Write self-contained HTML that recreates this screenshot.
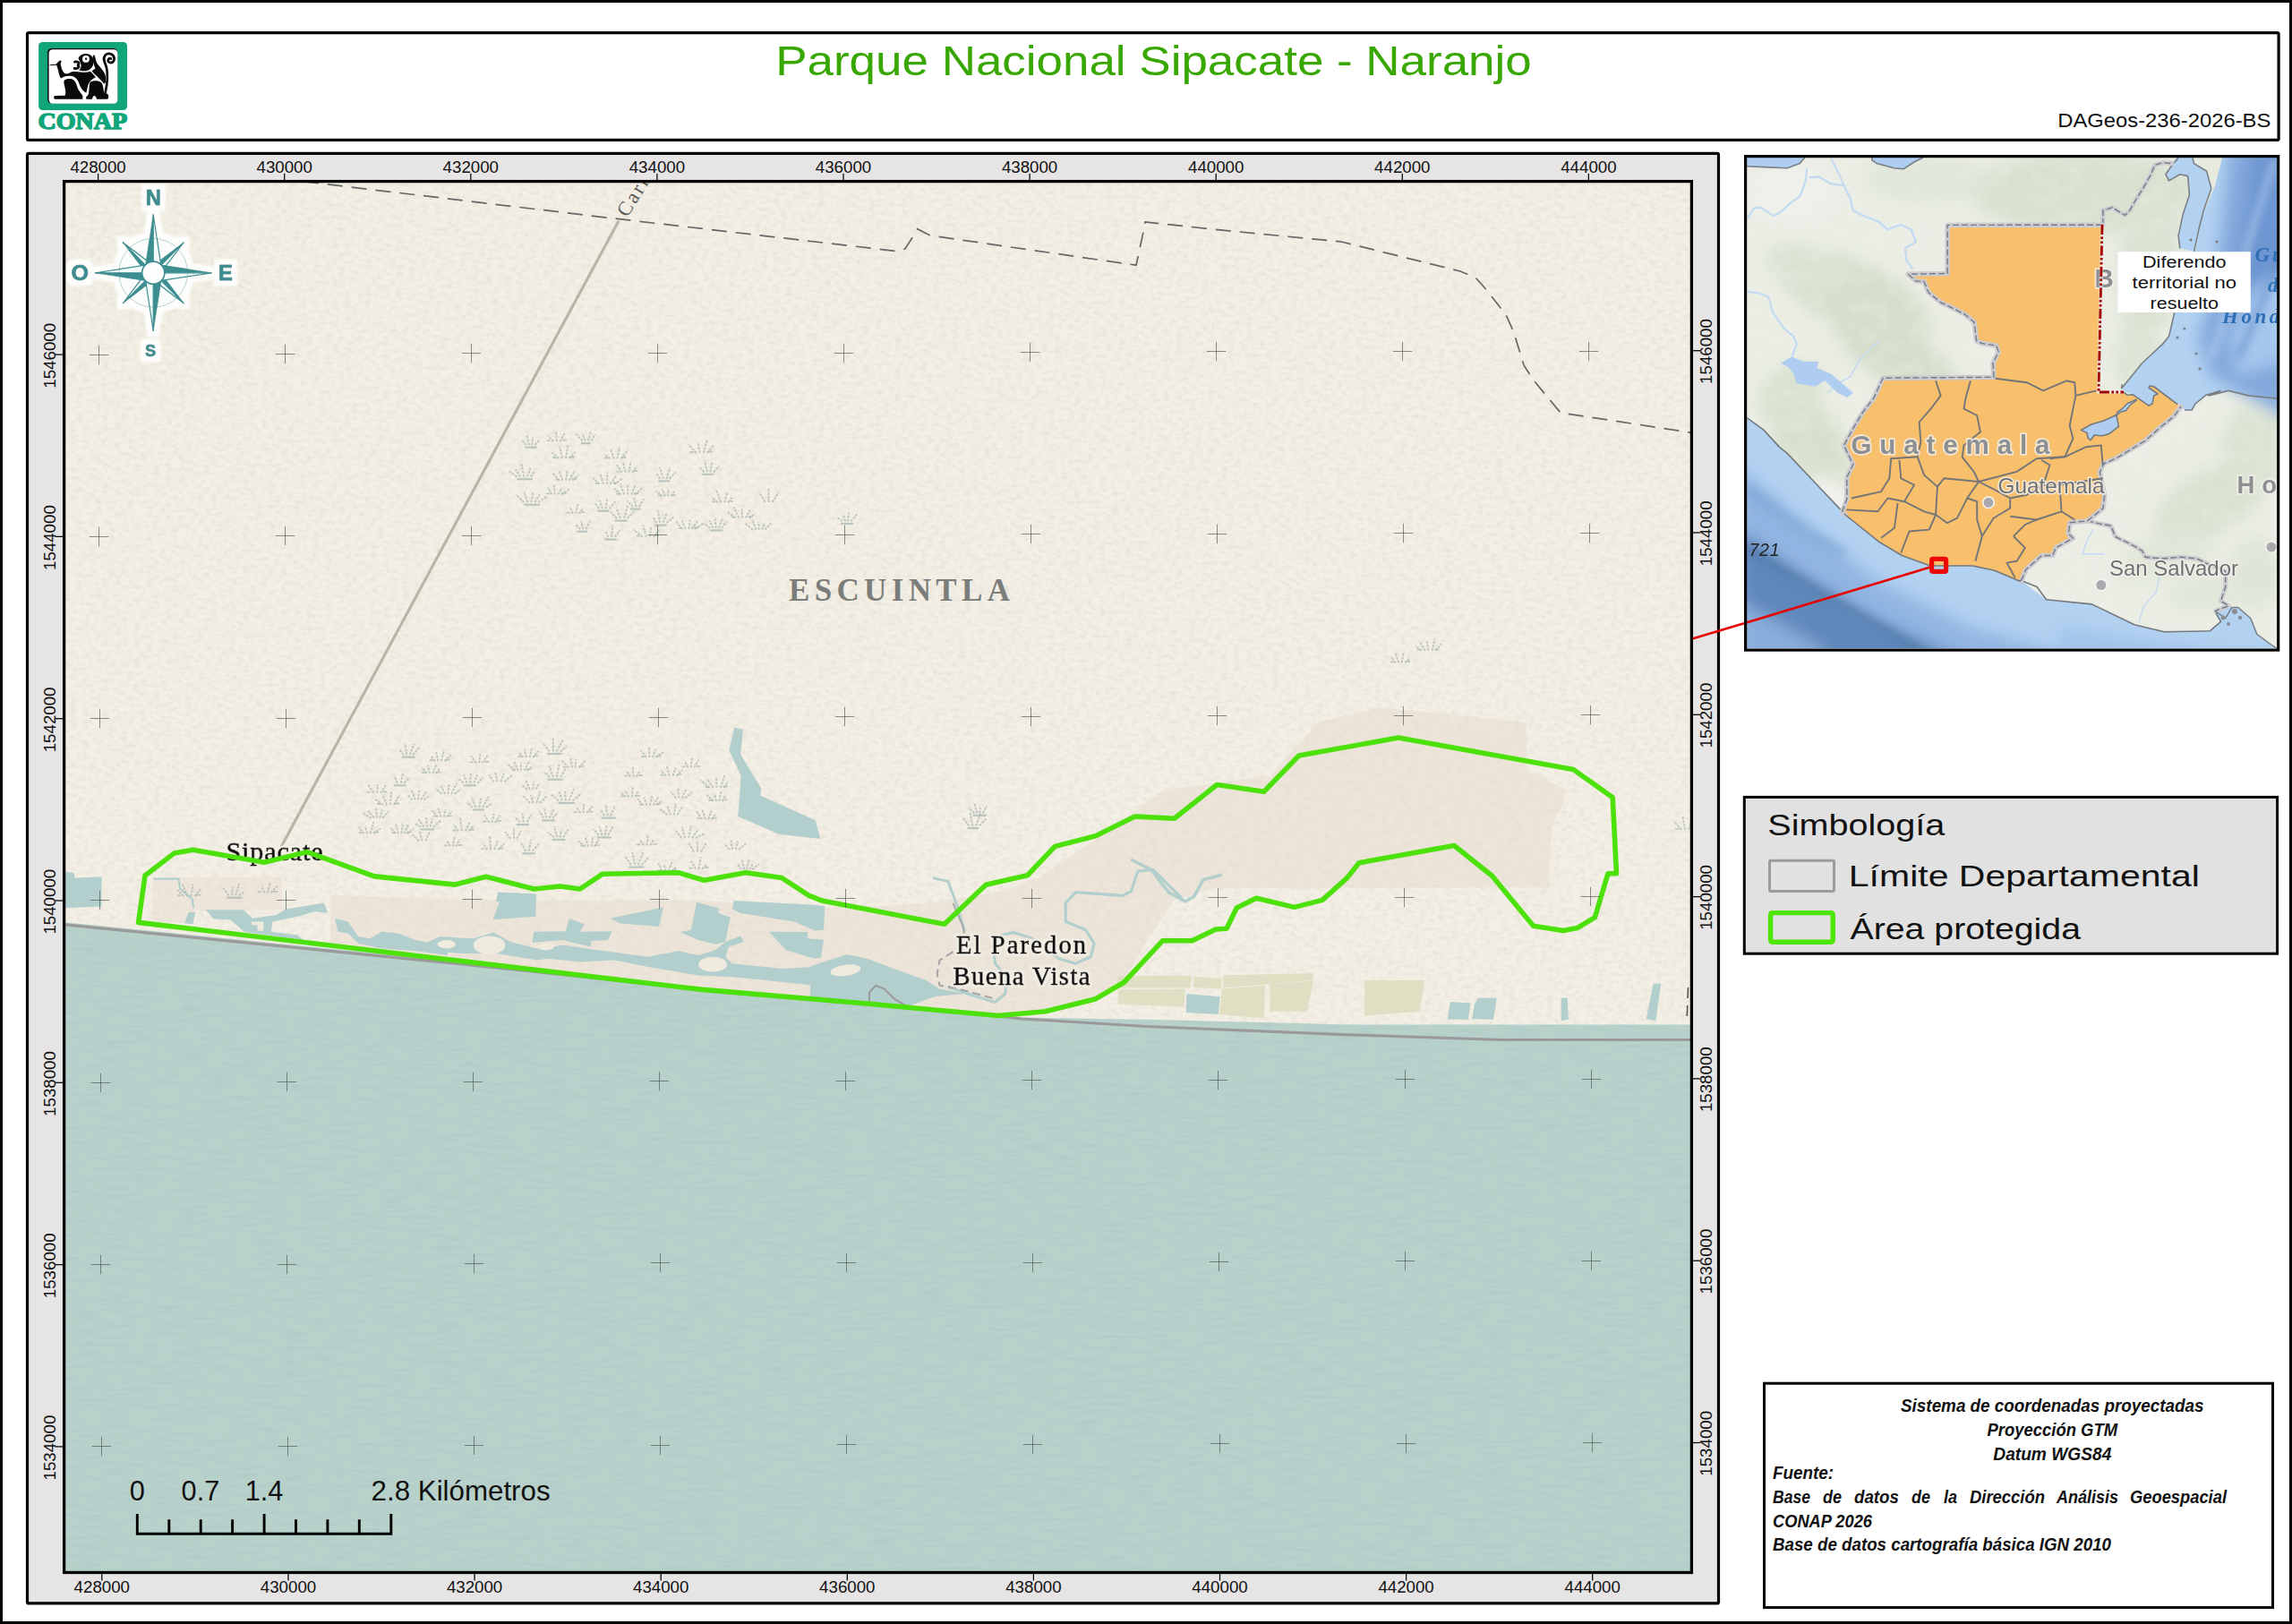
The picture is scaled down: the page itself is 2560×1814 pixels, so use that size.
<!DOCTYPE html>
<html lang="es"><head><meta charset="utf-8"><title>Parque Nacional Sipacate - Naranjo</title>
<style>
html,body{margin:0;padding:0;background:#fff;}
body{width:2560px;height:1814px;overflow:hidden;font-family:"Liberation Sans",sans-serif;}
svg{display:block;position:absolute;left:0;top:0;}
text{white-space:pre;}
</style></head><body>
<svg width="2560" height="1814" viewBox="0 0 2560 1814">
<defs>
<filter id="paper" x="0" y="0" width="100%" height="100%" filterUnits="objectBoundingBox">
  <feTurbulence type="fractalNoise" baseFrequency="0.14 0.22" numOctaves="2" seed="3" result="n"/>
  <feColorMatrix in="n" type="matrix" values="0 0 0 0 0.50  0 0 0 0 0.46  0 0 0 0 0.36  1.1 0 0 0 -0.46" result="c"/>
  <feComposite in="c" in2="SourceGraphic" operator="over"/>
</filter>
<filter id="waves" x="0" y="0" width="100%" height="100%">
  <feTurbulence type="fractalNoise" baseFrequency="0.035 0.24" numOctaves="2" seed="8" result="n"/>
  <feColorMatrix in="n" type="matrix" values="0 0 0 0 0.40  0 0 0 0 0.55  0 0 0 0 0.55  1.1 0 0 0 -0.48" result="c"/>
  <feComposite in="c" in2="SourceGraphic" operator="in"/>
</filter>
<filter id="halo" x="-20%" y="-20%" width="140%" height="140%">
  <feMorphology in="SourceAlpha" operator="dilate" radius="5.5" result="d"/>
  <feGaussianBlur in="d" stdDeviation="1.1" result="b"/>
  <feFlood flood-color="#fdfdfb"/><feComposite in2="b" operator="in" result="h"/>
  <feMerge><feMergeNode in="h"/><feMergeNode in="SourceGraphic"/></feMerge>
</filter>
<filter id="halo2" x="-10%" y="-30%" width="120%" height="160%"><feMorphology in="SourceAlpha" operator="dilate" radius="1.6" result="d"/><feGaussianBlur in="d" stdDeviation="1.2" result="b"/><feFlood flood-color="#f4f1e8" flood-opacity="0.9"/><feComposite in2="b" operator="in" result="h"/><feMerge><feMergeNode in="h"/><feMergeNode in="SourceGraphic"/></feMerge></filter>
<filter id="relief" x="0" y="0" width="100%" height="100%">
  <feTurbulence type="fractalNoise" baseFrequency="0.045 0.06" numOctaves="3" seed="5" result="n"/>
  <feColorMatrix in="n" type="matrix" values="0 0 0 0 0.80  0 0 0 0 0.86  0 0 0 0 0.76  1.6 0 0 0 -0.62"/>
</filter>
<filter id="blur2"><feGaussianBlur stdDeviation="2"/></filter>
<filter id="blur5"><feGaussianBlur stdDeviation="5"/></filter>
<filter id="blur9"><feGaussianBlur stdDeviation="9"/></filter>
<clipPath id="mapclip"><rect x="73" y="204" width="1815" height="1551"/></clipPath>
<clipPath id="insclip"><rect x="1951" y="176" width="592" height="548"/></clipPath>
</defs>
<rect x="1.5" y="1.5" width="2557" height="1811" fill="#fff" stroke="#000" stroke-width="3"/>
<rect x="30.5" y="36.6" width="2514.6" height="119.8" rx="1.5" fill="#fff" stroke="#000" stroke-width="3.2"/>
<text x="1288.5" y="83.8" font-family="Liberation Sans, sans-serif" font-size="46.5" fill="#38a800" text-anchor="middle" textLength="844.5" lengthAdjust="spacingAndGlyphs">Parque Nacional Sipacate - Naranjo</text>
<text x="2536.3" y="141.8" font-family="Liberation Sans, sans-serif" font-size="22.2" fill="#111" text-anchor="end" textLength="238" lengthAdjust="spacingAndGlyphs">DAGeos-236-2026-BS</text>
<rect x="30.5" y="171.4" width="1889" height="1619.5" rx="1.5" fill="#e6e4e5" stroke="#000" stroke-width="3.2"/>
<rect x="43.1" y="46.9" width="98.9" height="76.1" rx="4.2" fill="#10a67a"/>
<rect x="53.1" y="54.0" width="78.2" height="61.6" rx="4.6" fill="#0a0a0a"/>
<rect x="54.6" y="55.3" width="76.8" height="60.4" rx="4.2" fill="#fff"/>
<g transform="translate(36,40) scale(0.06774)" fill="#0a0a0a">
<path d="M650 595 C700 585 760 600 830 600 C900 600 940 590 962 585 L1048 682 C1000 700 950 740 925 800 C905 850 905 905 890 940 C850 925 810 880 785 820 C770 770 750 720 700 682 C660 655 590 655 540 668 L470 702 C450 660 435 610 425 560 C418 525 410 500 398 482 L290 490 L290 476 L392 468 C420 440 445 415 462 404 L484 424 C470 440 466 458 468 474 C478 520 492 570 520 606 C540 630 570 632 600 620 Z"/>
<path d="M528 735 C560 705 640 700 685 730 C720 760 735 820 752 870 C775 920 815 955 832 990 L832 1046 L372 1046 C350 1040 350 1000 372 990 L540 986 C560 950 548 900 538 850 C528 800 515 765 528 735 Z"/>
<path d="M958 765 C1000 735 1090 735 1140 770 C1170 800 1172 880 1186 940 C1215 950 1250 950 1256 980 C1262 1015 1250 1046 1235 1046 L1062 1046 C1058 1020 1052 1000 1022 986 C1000 996 992 1020 990 1046 L892 1046 C880 1020 890 995 916 986 C935 950 935 900 940 850 C942 810 945 785 958 765 Z"/>
<path d="M1005 318 C1025 310 1035 330 1045 380 C1050 410 1058 440 1080 470 C1110 505 1160 560 1190 612 C1212 655 1220 715 1208 760 C1200 785 1190 792 1182 790 C1160 760 1120 720 1080 680 C1045 645 1005 610 985 582 C1000 560 1020 548 1040 546 C1030 520 1020 490 1012 455 C1002 420 995 340 1005 318 Z"/>
<path d="M760 370 C790 300 880 280 950 310 C1010 340 1025 420 1000 490 C975 555 900 590 830 578 C800 575 775 570 770 565 C800 545 815 500 800 460 C790 425 770 400 760 370 Z"/>
<circle cx="885" cy="382" r="58" fill="#fff"/><circle cx="887" cy="380" r="17"/>
<path d="M700 430 C775 415 790 470 740 485 C790 495 775 550 695 538" fill="none" stroke="#0a0a0a" stroke-width="40" stroke-linecap="round"/>
<path d="M1205 940 C1235 800 1255 660 1225 525 C1205 445 1150 385 1205 318 C1260 268 1345 300 1352 372 C1356 432 1302 462 1262 432 C1235 402 1262 360 1298 376" fill="none" stroke="#0a0a0a" stroke-width="40" stroke-linecap="round"/>
</g>
<text x="42.6" y="144.4" font-family="Liberation Serif, serif" font-weight="bold" font-size="25.5" fill="#10a67a" stroke="#10a67a" stroke-width="1.5" stroke-linejoin="round" textLength="99.5" lengthAdjust="spacingAndGlyphs">CONAP</text>
<g clip-path="url(#mapclip)">
<rect x="70" y="201" width="1821" height="1557" fill="#f3efe5"/>
<rect x="70" y="201" width="1821" height="1557" fill="#f3efe5" filter="url(#paper)" opacity="0.42"/>
<polygon points="369.0,1000.0 540.0,1005.0 660.0,1005.4 779.0,1005.4 915.0,1014.0 1000.0,1011.0 1042.5,1008.2 1119.0,995.5 1158.6,981.3 1226.6,936.0 1300.3,882.2 1419.3,866.6 1472.6,807.0 1540.6,790.0 1705.0,807.0 1705.0,861.0 1747.4,880.8 1747.4,895.0 1733.0,923.0 1730.4,991.3 1354.0,992.6 1311.6,1005.4 1283.3,1046.5 1255.0,1097.5 1224.0,1115.0 1167.0,1130.0 1115.0,1134.0 970.0,1121.0 784.0,1105.0 500.0,1072.0 369.0,1056.0" fill="#e8dccf" opacity="0.55"/>
<polygon points="170.5,979.9 315.0,979.9 315.0,1016.8 218.6,1016.8 207.3,1030.9 170.5,1028.1" fill="#e8dccf" opacity="0.45"/>
<polygon points="69.0,1029.8 72.8,1030.2 500.0,1072.8 660.0,1089.4 784.6,1104.0 970.7,1120.0 1115.0,1133.0 1141.6,1136.5 1280.0,1138.8 1506.6,1144.5 1892.0,1144.5 1892.0,1760.0 69.0,1760.0" fill="#b8d1cb"/>
<polygon points="69.0,1029.8 72.8,1030.2 500.0,1072.8 660.0,1089.4 784.6,1104.0 970.7,1120.0 1115.0,1133.0 1141.6,1136.5 1280.0,1138.8 1506.6,1144.5 1892.0,1144.5 1892.0,1760.0 69.0,1760.0" fill="#b8d1cb" filter="url(#waves)" opacity="0.95"/>
<polyline points="69.0,1032.4 72.8,1032.8 500.0,1075.4 660.0,1091.8 784.6,1106.0 970.7,1122.0 1115.0,1135.0 1141.6,1138.0 1280.0,1146.5 1506.6,1155.8 1676.6,1161.5 1892.0,1161.5" fill="none" stroke="#9b9a9b" stroke-width="3.2"/>
<polygon points="820.1,812.8 830.0,815.1 827.1,842.5 850.4,880.8 849.2,888.4 910.7,916.2 916.4,936.9 869.6,931.8 824.3,912.0 827.7,866.6 814.4,838.3" fill="#b3cfcd" />
<polygon points="70.0,973.2 83.1,975.0 83.1,980.7 113.5,979.2 113.5,1012.6 70.0,1014.4" fill="#b3cfcd" />
<polygon points="210.7,1019.1 218.2,1019.1 215.4,1032.3 206.0,1031.3" fill="#b3cfcd" />
<polygon points="229.5,1016.3 271.7,1016.3 282.0,1025.7 308.3,1021.9 319.5,1015.4 361.7,1008.4 366.4,1019.7 351.4,1018.2 332.7,1023.8 304.5,1029.4 302.6,1040.7 332.7,1044.4 338.3,1050.1 285.8,1042.6 272.6,1040.7 257.6,1027.6 238.9,1026.6" fill="#b3cfcd" />
<polygon points="281.1,1029.4 294.2,1029.4 294.2,1039.8 287.6,1039.8 287.6,1033.2 281.1,1033.2" fill="#efeade"/>
<polyline points="171.3,981.6 199.5,981.6 201.3,992.9 214.5,1004.1 216.3,1014.4" fill="none" stroke="#b3cfcd" stroke-width="2.2"/>
<polygon points="373.9,1025.7 388.9,1029.4 400.2,1046.3 413.3,1048.2 426.5,1040.7 445.2,1042.6 464.0,1050.1 482.8,1053.8 500.0,1046.3 500.0,1067.0 464.0,1062.3 426.5,1059.5 400.2,1053.8 388.9,1042.6 377.7,1040.7" fill="#b3cfcd" />
<polygon points="556.0,996.6 599.1,998.5 598.2,1023.8 550.4,1027.2 557.9,1007.8 554.1,1006.9" fill="#b3cfcd" />
<polygon points="635.7,1025.7 652.6,1032.2 647.9,1040.7 683.6,1040.3 678.9,1050.1 660.1,1051.0 660.1,1057.6 643.2,1053.8 628.2,1050.1 594.4,1052.9 596.3,1040.7 632.0,1040.3" fill="#b3cfcd" />
<polygon points="681.7,1025.7 740.8,1013.5 736.1,1035.0 692.0,1031.3" fill="#b3cfcd" />
<polygon points="778.3,1007.8 802.7,1014.4 802.7,1020.0 815.8,1024.7 810.2,1051.9 798.9,1054.7 780.2,1050.1 759.5,1041.1 771.7,1038.8" fill="#b3cfcd" />
<polygon points="819.6,1006.0 910.0,1010.7 921.3,1012.2 920.0,1038.4 910.0,1039.5 887.1,1029.4 827.1,1020.0 817.7,1015.3" fill="#b3cfcd" />
<polygon points="859.0,1040.7 902.1,1041.1 902.1,1048.2 920.0,1049.7 916.8,1069.8 910.0,1070.7 877.7,1061.3" fill="#b3cfcd" />
<polygon points="478.1,1051.9 491.3,1046.3 528.8,1048.2 551.3,1041.6 570.1,1051.9 600.1,1059.4 630.1,1055.7 667.6,1061.3 723.9,1068.8 757.7,1062.3 780.2,1066.9 798.9,1061.3 810.2,1051.9 827.1,1045.4 830.8,1051.9 814.0,1057.6 810.2,1068.8 817.7,1076.3 874.0,1082.0 910.0,1080.1 910.0,1100.7 855.2,1095.1 817.7,1091.3 780.2,1089.5 723.9,1080.1 686.4,1072.6 648.9,1074.4 611.3,1070.7 600.1,1072.6 555.0,1065.1 517.5,1065.1 478.1,1062.3" fill="#b3cfcd" />
<ellipse cx="498.8" cy="1054.7" rx="10.3" ry="4.7" fill="#efeade" transform="rotate(0 498.8 1054.7)"/>
<ellipse cx="546.6" cy="1055.7" rx="17.8" ry="10.3" fill="#efeade" transform="rotate(0 546.6 1055.7)"/>
<ellipse cx="609.5" cy="1057.6" rx="9.4" ry="3.8" fill="#efeade" transform="rotate(0 609.5 1057.6)"/>
<ellipse cx="796.1" cy="1077.3" rx="15.9" ry="8.4" fill="#efeade" transform="rotate(0 796.1 1077.3)"/>
<polygon points="905.0,1079.5 914.4,1076.3 946.3,1066.0 968.8,1070.7 1002.6,1083.8 1034.5,1095.0 1049.5,1104.5 1077.6,1110.0 1045.0,1113.0 1028.0,1119.0 1012.0,1125.0 970.0,1121.5 905.0,1114.0" fill="#b3cfcd"/>
<ellipse cx="944.4" cy="1083.8" rx="17" ry="6.2" fill="#efeade" transform="rotate(-8 944.4 1083.8)"/>
<polyline points="1320.0,1003.2 1287.7,971.3 1270.9,973.1 1263.4,995.6 1254.0,1000.3 1201.4,996.6 1190.2,1008.8 1190.2,1029.4 1212.7,1038.8 1222.1,1053.8 1218.3,1068.8 1201.4,1076.3 1182.7,1070.7 1152.7,1048.2 1132.0,1041.6 1118.9,1044.4 1109.5,1055.7 1111.4,1076.3 1124.5,1091.3 1122.6,1110.1 1111.4,1119.5 1087.0,1112.0 1058.9,1102.6" fill="none" stroke="#b3cfcd" stroke-width="3.2" stroke-linejoin="round"/>
<polyline points="1042.0,980.6 1058.9,984.4 1070.1,1014.4 1077.6,1040.7" fill="none" stroke="#b3cfcd" stroke-width="3" stroke-linejoin="round"/>
<polyline points="1263.0,960.1 1285.7,971.4 1305.5,996.9 1323.9,1006.9 1333.8,1001.2 1343.7,982.8 1365.0,977.1" fill="none" stroke="#b3cfcd" stroke-width="3.5" stroke-linejoin="round"/>
<polyline points="1064.5,1063.2 1049.5,1072.6 1046.7,1087.6 1049.5,1100.7 1066.4,1103.5 1111.4,1115.7" fill="none" stroke="#a3a3a3" stroke-width="2" stroke-dasharray="9 5"/>
<path d="M970.7 1123.2 L971.1 1108.2 L978.2 1100.7 L987.6 1104.5 L998.8 1115.7 L1010.1 1122.3" fill="none" stroke="#9a9a9a" stroke-width="2"/>
<polyline points="1064.5,1008.8 1070.1,1021.9 1075.7,1035.0 1076.7,1042.6" fill="none" stroke="#a8a8a8" stroke-width="2"/>
<polygon points="1248.8,1090.1 1331.0,1090.1 1329.6,1103.4 1248.8,1103.4" fill="#dfdfc3" />
<polygon points="1248.8,1105.4 1323.9,1104.8 1322.5,1124.6 1248.8,1121.8" fill="#dfdfc3" />
<polygon points="1333.8,1090.7 1365.0,1093.5 1363.6,1104.8 1332.4,1102.5" fill="#dfdfc3" />
<polygon points="1366.4,1089.2 1467.0,1087.3 1466.4,1094.9 1366.4,1103.4" fill="#dfdfc3" />
<polygon points="1365.0,1104.8 1413.1,1100.6 1411.7,1137.4 1362.2,1133.1" fill="#dfdfc3" />
<polygon points="1418.8,1099.2 1467.0,1095.8 1459.9,1129.7 1418.2,1129.7" fill="#dfdfc3" />
<polygon points="1524.2,1094.9 1591.0,1094.9 1585.9,1129.7 1524.2,1134.6" fill="#dfdfc3" />
<polygon points="1325.3,1109.9 1362.7,1113.3 1360.7,1133.1 1324.8,1130.9" fill="#b3cfcd" />
<polygon points="1619.9,1119.0 1642.6,1120.4 1639.8,1138.8 1616.5,1138.8" fill="#b3cfcd" />
<polygon points="1651.1,1114.7 1671.8,1114.7 1668.1,1138.8 1644.0,1138.2 1646.9,1121.8" fill="#b3cfcd" />
<polygon points="1743.7,1114.7 1750.8,1114.7 1751.7,1138.8 1743.7,1140.2" fill="#b3cfcd" />
<polygon points="1846.6,1099.2 1855.1,1098.6 1849.4,1140.2 1838.6,1138.2" fill="#b3cfcd" />
<line x1="1885.5" y1="1103" x2="1884" y2="1143" stroke="#555" stroke-width="1.6" stroke-dasharray="12 8"/>
<path d="M693.2 552.5L686.6 545.7M697.2 552.5L692.7 540.5M701.2 552.5L701.3 541.4M705.2 552.5L709.3 542.4M709.2 552.5L718.8 543.7" stroke="#aebab6" stroke-width="1.9" fill="none" stroke-dasharray="2.8 1.2" opacity="0.78"/>
<path d="M708.3 551.0h5M688.2 551.5h4" stroke="#aebab6" stroke-width="1.8" opacity="0.75"/>
<path d="M737.4 534.8L733.0 528.4M740.9 534.8L736.8 522.1M744.4 534.8L748.4 522.6M748.0 534.8L754.7 527.3" stroke="#aebab6" stroke-width="1.9" fill="none" stroke-dasharray="2.8 1.2" opacity="0.78"/>
<path d="M735.4 537.4h12.8" stroke="#aebab6" stroke-width="2.2" opacity="0.8"/>
<path d="M650.6 492.5L643.5 484.9M653.7 492.5L650.4 484.1M656.9 492.5L659.7 482.6M660.0 492.5L664.9 485.1" stroke="#aebab6" stroke-width="1.9" fill="none" stroke-dasharray="2.8 1.2" opacity="0.78"/>
<path d="M648.8 495.1h10.8" stroke="#aebab6" stroke-width="2.2" opacity="0.8"/>
<path d="M577.6 532.6L568.0 525.8M581.4 532.6L575.6 524.5M585.2 532.6L582.4 518.0M589.0 532.6L592.3 523.0M592.7 532.6L597.7 525.7" stroke="#aebab6" stroke-width="1.9" fill="none" stroke-dasharray="2.8 1.2" opacity="0.78"/>
<path d="M577.4 535.2h17.6" stroke="#aebab6" stroke-width="2.2" opacity="0.8"/>
<path d="M616.3 552.4L611.8 544.2M619.8 552.4L618.7 541.6M623.3 552.4L627.8 544.8M626.8 552.4L636.6 546.0" stroke="#aebab6" stroke-width="1.9" fill="none" stroke-dasharray="2.8 1.2" opacity="0.78"/>
<path d="M627.7 550.9h5M610.2 551.4h4" stroke="#aebab6" stroke-width="1.8" opacity="0.75"/>
<path d="M739.9 554.3L732.5 548.3M743.0 554.3L739.6 545.9M746.1 554.3L746.5 546.1M749.2 554.3L753.8 548.3" stroke="#aebab6" stroke-width="1.9" fill="none" stroke-dasharray="2.8 1.2" opacity="0.78"/>
<path d="M750.1 552.8h5M734.5 553.3h4" stroke="#aebab6" stroke-width="1.8" opacity="0.75"/>
<path d="M669.7 540.9L662.1 533.7M673.8 540.9L670.6 529.4M677.8 540.9L678.5 527.2M681.8 540.9L688.0 531.8M685.9 540.9L695.4 534.7" stroke="#aebab6" stroke-width="1.9" fill="none" stroke-dasharray="2.8 1.2" opacity="0.78"/>
<path d="M684.9 539.4h5M664.7 539.9h4" stroke="#aebab6" stroke-width="1.8" opacity="0.75"/>
<path d="M588.0 497.1L582.6 491.6M591.2 497.1L588.5 486.8M594.3 497.1L595.2 488.4M597.5 497.1L602.0 491.7" stroke="#aebab6" stroke-width="1.9" fill="none" stroke-dasharray="2.8 1.2" opacity="0.78"/>
<path d="M586.2 499.7h13.4" stroke="#aebab6" stroke-width="2.2" opacity="0.8"/>
<path d="M648.0 591.1L642.4 585.4M651.3 591.1L648.8 581.9M654.5 591.1L659.5 581.3" stroke="#aebab6" stroke-width="1.9" fill="none" stroke-dasharray="2.8 1.2" opacity="0.78"/>
<path d="M644.5 593.7h11.4" stroke="#aebab6" stroke-width="2.2" opacity="0.8"/>
<path d="M694.9 527.7L689.1 519.2M698.7 527.7L695.9 516.8M702.5 527.7L704.6 515.0M706.3 527.7L711.5 521.1" stroke="#aebab6" stroke-width="1.9" fill="none" stroke-dasharray="2.8 1.2" opacity="0.78"/>
<path d="M707.3 526.2h5M688.3 526.7h4" stroke="#aebab6" stroke-width="1.8" opacity="0.75"/>
<path d="M777.7 506.0L768.9 496.3M781.8 506.0L779.2 493.7M785.8 506.0L789.8 491.3M789.8 506.0L797.4 497.0" stroke="#aebab6" stroke-width="1.9" fill="none" stroke-dasharray="2.8 1.2" opacity="0.78"/>
<path d="M790.9 504.5h5M770.7 505.0h4" stroke="#aebab6" stroke-width="1.8" opacity="0.75"/>
<path d="M585.1 561.1L576.3 552.3M589.2 561.1L585.2 548.9M593.3 561.1L595.0 550.5M597.3 561.1L602.8 552.3M601.4 561.1L610.4 554.5" stroke="#aebab6" stroke-width="1.9" fill="none" stroke-dasharray="2.8 1.2" opacity="0.78"/>
<path d="M584.9 563.7h18.2" stroke="#aebab6" stroke-width="2.2" opacity="0.8"/>
<path d="M689.0 579.0L682.1 571.7M693.0 579.0L688.3 567.0M697.0 579.0L701.2 564.7M700.9 579.0L709.9 569.3" stroke="#aebab6" stroke-width="1.9" fill="none" stroke-dasharray="2.8 1.2" opacity="0.78"/>
<path d="M686.7 581.6h14.1" stroke="#aebab6" stroke-width="2.2" opacity="0.8"/>
<path d="M624.7 536.7L616.9 527.9M628.4 536.7L624.8 526.3M632.1 536.7L633.6 526.1M635.8 536.7L642.0 525.4M639.5 536.7L646.6 530.4" stroke="#aebab6" stroke-width="1.9" fill="none" stroke-dasharray="2.8 1.2" opacity="0.78"/>
<path d="M638.6 535.2h5M620.1 535.7h4" stroke="#aebab6" stroke-width="1.8" opacity="0.75"/>
<path d="M681.7 512.5L675.1 507.4M685.6 512.5L681.9 500.9M689.4 512.5L691.9 499.4M693.3 512.5L701.7 502.9" stroke="#aebab6" stroke-width="1.9" fill="none" stroke-dasharray="2.8 1.2" opacity="0.78"/>
<path d="M694.3 511.0h5M675.1 511.5h4" stroke="#aebab6" stroke-width="1.8" opacity="0.75"/>
<path d="M618.3 493.2L611.9 486.7M621.8 493.2L621.1 481.6M625.4 493.2L630.8 483.8" stroke="#aebab6" stroke-width="1.9" fill="none" stroke-dasharray="2.8 1.2" opacity="0.78"/>
<path d="M628.1 491.7h5M610.4 492.2h4" stroke="#aebab6" stroke-width="1.8" opacity="0.75"/>
<path d="M793.4 589.9L785.8 584.8M796.5 589.9L792.3 581.2M799.7 589.9L798.3 578.0M802.8 589.9L807.1 578.4M806.0 589.9L811.9 582.8" stroke="#aebab6" stroke-width="1.9" fill="none" stroke-dasharray="2.8 1.2" opacity="0.78"/>
<path d="M793.2 592.5h14.2" stroke="#aebab6" stroke-width="2.2" opacity="0.8"/>
<path d="M801.6 561.3L795.3 555.7M805.4 561.3L799.9 547.4M809.2 561.3L812.0 550.7M813.0 561.3L818.2 555.1" stroke="#aebab6" stroke-width="1.9" fill="none" stroke-dasharray="2.8 1.2" opacity="0.78"/>
<path d="M814.0 559.8h5M795.1 560.3h4" stroke="#aebab6" stroke-width="1.8" opacity="0.75"/>
<path d="M762.0 590.9L754.6 581.8M765.6 590.9L762.0 581.6M769.1 590.9L770.8 580.7M772.6 590.9L779.8 581.1M776.2 590.9L785.7 584.8" stroke="#aebab6" stroke-width="1.9" fill="none" stroke-dasharray="2.8 1.2" opacity="0.78"/>
<path d="M775.4 589.4h5M757.7 589.9h4" stroke="#aebab6" stroke-width="1.8" opacity="0.75"/>
<path d="M840.8 591.7L832.5 584.8M844.2 591.7L840.2 579.5M847.5 591.7L847.5 582.9M850.8 591.7L854.1 583.9M854.2 591.7L861.2 584.6" stroke="#aebab6" stroke-width="1.9" fill="none" stroke-dasharray="2.8 1.2" opacity="0.78"/>
<path d="M733.3 584.0L729.0 577.3M737.0 584.0L735.1 570.4M740.7 584.0L744.8 572.6M744.4 584.0L752.4 577.5" stroke="#aebab6" stroke-width="1.9" fill="none" stroke-dasharray="2.8 1.2" opacity="0.78"/>
<path d="M731.2 586.6h13.4" stroke="#aebab6" stroke-width="2.2" opacity="0.8"/>
<path d="M669.2 568.1L663.7 561.3M672.9 568.1L669.6 558.9M676.6 568.1L678.3 555.9M680.3 568.1L687.4 560.3" stroke="#aebab6" stroke-width="1.9" fill="none" stroke-dasharray="2.8 1.2" opacity="0.78"/>
<path d="M667.2 570.7h13.2" stroke="#aebab6" stroke-width="2.2" opacity="0.8"/>
<path d="M786.5 527.3L781.4 521.7M790.0 527.3L787.1 514.4M793.5 527.3L795.1 516.2M797.1 527.3L803.5 520.6" stroke="#aebab6" stroke-width="1.9" fill="none" stroke-dasharray="2.8 1.2" opacity="0.78"/>
<path d="M784.5 529.9h12.5" stroke="#aebab6" stroke-width="2.2" opacity="0.8"/>
<path d="M821.5 578.6L813.1 571.8M825.2 578.6L819.5 566.2M829.0 578.6L828.7 568.5M832.8 578.6L837.8 569.5M836.6 578.6L843.7 573.7" stroke="#aebab6" stroke-width="1.9" fill="none" stroke-dasharray="2.8 1.2" opacity="0.78"/>
<path d="M835.7 577.1h5M816.8 577.6h4" stroke="#aebab6" stroke-width="1.8" opacity="0.75"/>
<path d="M624.2 512.0L616.6 505.5M628.0 512.0L625.1 499.0M631.9 512.0L634.4 497.1M635.8 512.0L642.6 504.8" stroke="#aebab6" stroke-width="1.9" fill="none" stroke-dasharray="2.8 1.2" opacity="0.78"/>
<path d="M636.8 510.5h5M617.4 511.0h4" stroke="#aebab6" stroke-width="1.8" opacity="0.75"/>
<path d="M679.3 600.0L676.1 592.6M683.0 600.0L684.6 586.8M686.7 600.0L692.5 592.2" stroke="#aebab6" stroke-width="1.9" fill="none" stroke-dasharray="2.8 1.2" opacity="0.78"/>
<path d="M675.3 602.6h13.3" stroke="#aebab6" stroke-width="2.2" opacity="0.8"/>
<path d="M854.7 560.9L847.9 549.9M858.6 560.9L858.4 545.8M862.5 560.9L869.8 550.2" stroke="#aebab6" stroke-width="1.9" fill="none" stroke-dasharray="2.8 1.2" opacity="0.78"/>
<path d="M639.7 573.6L636.4 565.9M642.8 573.6L645.8 562.5M645.9 573.6L650.9 568.6" stroke="#aebab6" stroke-width="1.9" fill="none" stroke-dasharray="2.8 1.2" opacity="0.78"/>
<path d="M648.2 572.1h5M632.7 572.6h4" stroke="#aebab6" stroke-width="1.8" opacity="0.75"/>
<path d="M717.9 599.7L707.5 591.8M721.9 599.7L718.3 586.4M725.9 599.7L727.3 588.1M730.0 599.7L737.2 590.9" stroke="#aebab6" stroke-width="1.9" fill="none" stroke-dasharray="2.8 1.2" opacity="0.78"/>
<path d="M731.0 598.2h5M710.9 598.7h4" stroke="#aebab6" stroke-width="1.8" opacity="0.75"/>
<path d="M707.2 566.0L699.9 559.3M710.6 566.0L708.2 556.4M714.0 566.0L719.0 557.3" stroke="#aebab6" stroke-width="1.9" fill="none" stroke-dasharray="2.8 1.2" opacity="0.78"/>
<path d="M703.7 568.6h11.7" stroke="#aebab6" stroke-width="2.2" opacity="0.8"/>
<path d="M570.4 936.7L564.2 929.1M573.9 936.7L574.3 924.7M577.3 936.7L581.9 928.3" stroke="#aebab6" stroke-width="1.9" fill="none" stroke-dasharray="2.8 1.2" opacity="0.78"/>
<path d="M613.8 868.1L607.6 862.0M617.9 868.1L613.3 855.3M621.9 868.1L624.4 853.8M626.0 868.1L631.5 859.1" stroke="#aebab6" stroke-width="1.9" fill="none" stroke-dasharray="2.8 1.2" opacity="0.78"/>
<path d="M611.6 870.7h17.3" stroke="#aebab6" stroke-width="2.2" opacity="0.8"/>
<path d="M485.9 850.2L481.0 844.2M489.4 850.2L487.2 840.1M493.0 850.2L496.0 837.4M496.5 850.2L503.9 843.4" stroke="#aebab6" stroke-width="1.9" fill="none" stroke-dasharray="2.8 1.2" opacity="0.78"/>
<path d="M497.4 848.7h5M479.8 849.2h4" stroke="#aebab6" stroke-width="1.8" opacity="0.75"/>
<path d="M531.9 852.3L525.7 844.1M535.3 852.3L536.1 842.7M538.7 852.3L544.5 843.7" stroke="#aebab6" stroke-width="1.9" fill="none" stroke-dasharray="2.8 1.2" opacity="0.78"/>
<path d="M541.3 850.8h5M524.4 851.3h4" stroke="#aebab6" stroke-width="1.8" opacity="0.75"/>
<path d="M755.1 891.6L749.2 884.2M758.5 891.6L757.0 879.7M761.9 891.6L766.1 881.9M765.3 891.6L773.1 885.2" stroke="#aebab6" stroke-width="1.9" fill="none" stroke-dasharray="2.8 1.2" opacity="0.78"/>
<path d="M775.1 951.4L768.6 940.8M779.1 951.4L779.0 939.0M783.1 951.4L789.2 941.0" stroke="#aebab6" stroke-width="1.9" fill="none" stroke-dasharray="2.8 1.2" opacity="0.78"/>
<path d="M575.5 860.8L567.3 854.1M578.7 860.8L574.0 850.1M582.0 860.8L581.7 851.9M585.3 860.8L591.6 850.0M588.5 860.8L594.1 856.5" stroke="#aebab6" stroke-width="1.9" fill="none" stroke-dasharray="2.8 1.2" opacity="0.78"/>
<path d="M587.8 859.3h5M571.4 859.8h4" stroke="#aebab6" stroke-width="1.8" opacity="0.75"/>
<path d="M493.2 886.9L486.6 881.3M496.9 886.9L492.6 877.7M500.5 886.9L501.5 876.1M504.2 886.9L510.2 874.8M507.8 886.9L514.7 881.1" stroke="#aebab6" stroke-width="1.9" fill="none" stroke-dasharray="2.8 1.2" opacity="0.78"/>
<path d="M648.3 908.2L644.1 902.3M651.6 908.2L652.1 898.0M655.0 908.2L661.8 900.7" stroke="#aebab6" stroke-width="1.9" fill="none" stroke-dasharray="2.8 1.2" opacity="0.78"/>
<path d="M657.5 906.7h5M640.8 907.2h4" stroke="#aebab6" stroke-width="1.8" opacity="0.75"/>
<path d="M551.5 873.3L546.3 865.1M555.4 873.3L553.4 862.7M559.4 873.3L562.8 864.0M563.3 873.3L572.8 865.1" stroke="#aebab6" stroke-width="1.9" fill="none" stroke-dasharray="2.8 1.2" opacity="0.78"/>
<path d="M444.0 874.7L440.5 867.0M447.8 874.7L450.2 862.4M451.5 874.7L457.1 868.7" stroke="#aebab6" stroke-width="1.9" fill="none" stroke-dasharray="2.8 1.2" opacity="0.78"/>
<path d="M439.9 877.3h13.6" stroke="#aebab6" stroke-width="2.2" opacity="0.8"/>
<path d="M719.0 944.3L714.4 937.5M722.5 944.3L723.5 933.9M726.0 944.3L730.2 937.8" stroke="#aebab6" stroke-width="1.9" fill="none" stroke-dasharray="2.8 1.2" opacity="0.78"/>
<path d="M728.7 942.8h5M711.1 943.3h4" stroke="#aebab6" stroke-width="1.8" opacity="0.75"/>
<path d="M618.8 935.3L611.6 929.5M622.3 935.3L618.9 923.0M625.7 935.3L626.9 926.7M629.1 935.3L634.7 926.5" stroke="#aebab6" stroke-width="1.9" fill="none" stroke-dasharray="2.8 1.2" opacity="0.78"/>
<path d="M616.9 937.9h14.5" stroke="#aebab6" stroke-width="2.2" opacity="0.8"/>
<path d="M613.7 839.4L606.3 830.2M617.8 839.4L617.8 824.8M621.8 839.4L628.8 826.5M625.9 839.4L633.0 833.7" stroke="#aebab6" stroke-width="1.9" fill="none" stroke-dasharray="2.8 1.2" opacity="0.78"/>
<path d="M611.4 842.0h15.9" stroke="#aebab6" stroke-width="2.2" opacity="0.8"/>
<path d="M528.0 901.9L521.7 896.1M531.7 901.9L526.6 890.0M535.4 901.9L537.1 891.8M539.1 901.9L545.9 889.8M542.8 901.9L549.7 897.2" stroke="#aebab6" stroke-width="1.9" fill="none" stroke-dasharray="2.8 1.2" opacity="0.78"/>
<path d="M527.8 904.5h13.0" stroke="#aebab6" stroke-width="2.2" opacity="0.8"/>
<path d="M460.6 893.3L455.3 888.0M463.7 893.3L459.9 883.0M466.8 893.3L468.6 881.4M470.0 893.3L476.3 884.1M473.1 893.3L479.8 889.2" stroke="#aebab6" stroke-width="1.9" fill="none" stroke-dasharray="2.8 1.2" opacity="0.78"/>
<path d="M607.2 913.8L602.2 905.7M610.5 913.8L607.8 902.2M613.7 913.8L618.4 904.0M617.0 913.8L623.4 907.5" stroke="#aebab6" stroke-width="1.9" fill="none" stroke-dasharray="2.8 1.2" opacity="0.78"/>
<path d="M605.4 916.4h14.7" stroke="#aebab6" stroke-width="2.2" opacity="0.8"/>
<path d="M668.9 932.8L662.9 925.9M672.3 932.8L669.8 923.5M675.7 932.8L677.7 921.8M679.1 932.8L684.9 923.3" stroke="#aebab6" stroke-width="1.9" fill="none" stroke-dasharray="2.8 1.2" opacity="0.78"/>
<path d="M667.0 935.4h15.5" stroke="#aebab6" stroke-width="2.2" opacity="0.8"/>
<path d="M406.6 931.2L400.4 923.8M410.0 931.2L408.0 922.7M413.5 931.2L417.2 918.1M416.9 931.2L425.1 925.3" stroke="#aebab6" stroke-width="1.9" fill="none" stroke-dasharray="2.8 1.2" opacity="0.78"/>
<path d="M417.8 929.7h5M400.6 930.2h4" stroke="#aebab6" stroke-width="1.8" opacity="0.75"/>
<path d="M580.9 918.5L575.2 912.4M584.8 918.5L583.6 908.2M588.7 918.5L593.1 909.7" stroke="#aebab6" stroke-width="1.9" fill="none" stroke-dasharray="2.8 1.2" opacity="0.78"/>
<path d="M576.8 921.1h14.2" stroke="#aebab6" stroke-width="2.2" opacity="0.8"/>
<path d="M761.3 936.1L755.0 927.8M765.2 936.1L761.5 923.5M769.1 936.1L771.9 922.5M772.9 936.1L780.3 926.2M776.8 936.1L787.8 930.8" stroke="#aebab6" stroke-width="1.9" fill="none" stroke-dasharray="2.8 1.2" opacity="0.78"/>
<path d="M591.9 897.0L583.9 888.3M595.5 897.0L592.9 888.0M599.2 897.0L603.4 883.8M602.8 897.0L610.3 889.7" stroke="#aebab6" stroke-width="1.9" fill="none" stroke-dasharray="2.8 1.2" opacity="0.78"/>
<path d="M546.4 918.7L541.2 910.1M549.6 918.7L551.9 909.0M552.7 918.7L558.8 910.5" stroke="#aebab6" stroke-width="1.9" fill="none" stroke-dasharray="2.8 1.2" opacity="0.78"/>
<path d="M555.1 917.2h5M539.4 917.7h4" stroke="#aebab6" stroke-width="1.8" opacity="0.75"/>
<path d="M704.9 965.9L697.7 955.8M708.9 965.9L706.2 951.9M712.8 965.9L718.6 951.9M716.8 965.9L725.3 957.0" stroke="#aebab6" stroke-width="1.9" fill="none" stroke-dasharray="2.8 1.2" opacity="0.78"/>
<path d="M702.7 968.5h16.6" stroke="#aebab6" stroke-width="2.2" opacity="0.8"/>
<path d="M814.8 948.9L809.0 942.4M818.2 948.9L816.3 938.8M821.7 948.9L824.2 939.8M825.2 948.9L833.3 942.0" stroke="#aebab6" stroke-width="1.9" fill="none" stroke-dasharray="2.8 1.2" opacity="0.78"/>
<path d="M722.1 846.0L715.7 838.5M725.5 846.0L724.8 834.8M728.9 846.0L732.5 837.1M732.2 846.0L741.7 839.7" stroke="#aebab6" stroke-width="1.9" fill="none" stroke-dasharray="2.8 1.2" opacity="0.78"/>
<path d="M733.1 844.5h5M716.2 845.0h4" stroke="#aebab6" stroke-width="1.8" opacity="0.75"/>
<path d="M544.1 949.2L539.3 941.3M548.2 949.2L547.1 933.6M552.2 949.2L555.9 939.3M556.2 949.2L563.5 942.1" stroke="#aebab6" stroke-width="1.9" fill="none" stroke-dasharray="2.8 1.2" opacity="0.78"/>
<path d="M557.3 947.7h5M537.1 948.2h4" stroke="#aebab6" stroke-width="1.8" opacity="0.75"/>
<path d="M512.0 928.4L506.9 921.2M515.9 928.4L513.9 913.3M519.8 928.4L524.4 918.7M523.6 928.4L529.8 922.0" stroke="#aebab6" stroke-width="1.9" fill="none" stroke-dasharray="2.8 1.2" opacity="0.78"/>
<path d="M524.7 926.9h5M505.3 927.4h4" stroke="#aebab6" stroke-width="1.8" opacity="0.75"/>
<path d="M675.2 911.1L670.4 904.3M678.6 911.1L676.2 898.8M682.1 911.1L686.2 901.0" stroke="#aebab6" stroke-width="1.9" fill="none" stroke-dasharray="2.8 1.2" opacity="0.78"/>
<path d="M671.5 913.7h16.8" stroke="#aebab6" stroke-width="2.2" opacity="0.8"/>
<path d="M745.4 910.3L737.0 903.4M749.1 910.3L745.3 900.5M752.8 910.3L754.9 897.4M756.4 910.3L761.7 901.5" stroke="#aebab6" stroke-width="1.9" fill="none" stroke-dasharray="2.8 1.2" opacity="0.78"/>
<path d="M428.1 899.0L419.1 892.9M432.1 899.0L427.4 887.4M436.0 899.0L437.0 884.5M440.0 899.0L446.3 887.7" stroke="#aebab6" stroke-width="1.9" fill="none" stroke-dasharray="2.8 1.2" opacity="0.78"/>
<path d="M441.0 897.5h5M421.2 898.0h4" stroke="#aebab6" stroke-width="1.8" opacity="0.75"/>
<path d="M653.8 945.7L646.1 939.6M657.2 945.7L653.4 934.4M660.5 945.7L662.3 933.8M663.8 945.7L669.0 937.5" stroke="#aebab6" stroke-width="1.9" fill="none" stroke-dasharray="2.8 1.2" opacity="0.78"/>
<path d="M664.6 944.2h5M648.1 944.7h4" stroke="#aebab6" stroke-width="1.8" opacity="0.75"/>
<path d="M468.0 939.3L460.8 932.3M471.6 939.3L468.4 927.8M475.2 939.3L480.2 928.5" stroke="#aebab6" stroke-width="1.9" fill="none" stroke-dasharray="2.8 1.2" opacity="0.78"/>
<path d="M797.0 894.9L789.3 887.7M800.2 894.9L798.1 887.1M803.3 894.9L805.2 884.2M806.5 894.9L810.9 888.2" stroke="#aebab6" stroke-width="1.9" fill="none" stroke-dasharray="2.8 1.2" opacity="0.78"/>
<path d="M807.3 893.4h5M791.6 893.9h4" stroke="#aebab6" stroke-width="1.8" opacity="0.75"/>
<path d="M489.3 912.7L482.5 905.4M492.5 912.7L489.5 902.8M495.7 912.7L497.8 904.1M498.9 912.7L504.7 905.8" stroke="#aebab6" stroke-width="1.9" fill="none" stroke-dasharray="2.8 1.2" opacity="0.78"/>
<path d="M499.8 911.2h5M483.7 911.7h4" stroke="#aebab6" stroke-width="1.8" opacity="0.75"/>
<path d="M704.3 867.6L699.5 861.0M707.5 867.6L706.8 856.3M710.6 867.6L714.4 861.9" stroke="#aebab6" stroke-width="1.9" fill="none" stroke-dasharray="2.8 1.2" opacity="0.78"/>
<path d="M713.0 866.1h5M697.2 866.6h4" stroke="#aebab6" stroke-width="1.8" opacity="0.75"/>
<path d="M777.1 970.7L771.9 962.0M780.4 970.7L782.9 957.8M783.8 970.7L789.9 965.3" stroke="#aebab6" stroke-width="1.9" fill="none" stroke-dasharray="2.8 1.2" opacity="0.78"/>
<path d="M786.4 969.2h5M769.5 969.7h4" stroke="#aebab6" stroke-width="1.8" opacity="0.75"/>
<path d="M584.6 846.2L578.9 840.2M588.0 846.2L585.9 836.7M591.5 846.2L593.9 836.1M594.9 846.2L601.2 838.9" stroke="#aebab6" stroke-width="1.9" fill="none" stroke-dasharray="2.8 1.2" opacity="0.78"/>
<path d="M595.8 844.7h5M578.6 845.2h4" stroke="#aebab6" stroke-width="1.8" opacity="0.75"/>
<path d="M792.7 880.0L782.7 871.6M796.7 880.0L789.7 869.9M800.6 880.0L800.1 868.2M804.6 880.0L809.7 865.6M808.6 880.0L813.5 872.8" stroke="#aebab6" stroke-width="1.9" fill="none" stroke-dasharray="2.8 1.2" opacity="0.78"/>
<path d="M807.7 878.5h5M787.7 879.0h4" stroke="#aebab6" stroke-width="1.8" opacity="0.75"/>
<path d="M699.1 890.3L693.0 884.9M702.5 890.3L698.2 882.6M705.9 890.3L706.9 878.7M709.3 890.3L712.7 883.5" stroke="#aebab6" stroke-width="1.9" fill="none" stroke-dasharray="2.8 1.2" opacity="0.78"/>
<path d="M710.2 888.8h5M693.2 889.3h4" stroke="#aebab6" stroke-width="1.8" opacity="0.75"/>
<path d="M828.2 971.3L824.1 965.8M831.3 971.3L828.7 959.9M834.3 971.3L836.2 960.2M837.4 971.3L841.2 964.1M840.5 971.3L847.6 964.9" stroke="#aebab6" stroke-width="1.9" fill="none" stroke-dasharray="2.8 1.2" opacity="0.78"/>
<path d="M828.0 973.9h12.1" stroke="#aebab6" stroke-width="2.2" opacity="0.8"/>
<path d="M476.8 864.1L471.0 857.1M480.0 864.1L477.8 855.0M483.3 864.1L486.9 854.2M486.5 864.1L491.6 858.2" stroke="#aebab6" stroke-width="1.9" fill="none" stroke-dasharray="2.8 1.2" opacity="0.78"/>
<path d="M487.3 862.6h5M471.2 863.1h4" stroke="#aebab6" stroke-width="1.8" opacity="0.75"/>
<path d="M784.2 915.2L778.0 906.2M787.7 915.2L784.6 905.0M791.2 915.2L794.4 905.8M794.7 915.2L799.5 909.5" stroke="#aebab6" stroke-width="1.9" fill="none" stroke-dasharray="2.8 1.2" opacity="0.78"/>
<path d="M795.6 913.7h5M778.2 914.2h4" stroke="#aebab6" stroke-width="1.8" opacity="0.75"/>
<path d="M740.1 973.1L735.2 964.3M743.3 973.1L741.8 965.0M746.5 973.1L750.9 961.9M749.7 973.1L755.7 968.4" stroke="#aebab6" stroke-width="1.9" fill="none" stroke-dasharray="2.8 1.2" opacity="0.78"/>
<path d="M750.5 971.6h5M734.6 972.1h4" stroke="#aebab6" stroke-width="1.8" opacity="0.75"/>
<path d="M588.6 881.8L583.4 877.2M591.7 881.8L587.1 870.8M594.8 881.8L596.1 873.7M598.0 881.8L602.9 874.8" stroke="#aebab6" stroke-width="1.9" fill="none" stroke-dasharray="2.8 1.2" opacity="0.78"/>
<path d="M624.0 894.4L615.3 887.3M627.9 894.4L624.4 883.8M631.8 894.4L631.2 883.0M635.7 894.4L640.9 881.1M639.6 894.4L649.4 886.2" stroke="#aebab6" stroke-width="1.9" fill="none" stroke-dasharray="2.8 1.2" opacity="0.78"/>
<path d="M623.8 897.0h18.4" stroke="#aebab6" stroke-width="2.2" opacity="0.8"/>
<path d="M414.7 913.6L405.6 908.7M417.9 913.6L411.2 905.8M421.0 913.6L419.9 902.2M424.1 913.6L427.0 904.4M427.2 913.6L433.9 906.3" stroke="#aebab6" stroke-width="1.9" fill="none" stroke-dasharray="2.8 1.2" opacity="0.78"/>
<path d="M743.9 866.7L738.1 860.4M747.8 866.7L744.7 855.6M751.6 866.7L754.3 857.5M755.4 866.7L762.6 859.7" stroke="#aebab6" stroke-width="1.9" fill="none" stroke-dasharray="2.8 1.2" opacity="0.78"/>
<path d="M756.4 865.2h5M737.3 865.7h4" stroke="#aebab6" stroke-width="1.8" opacity="0.75"/>
<path d="M718.5 899.6L712.1 892.3M722.2 899.6L719.5 890.5M725.9 899.6L728.6 887.7M729.7 899.6L735.1 890.2M733.4 899.6L739.6 894.2" stroke="#aebab6" stroke-width="1.9" fill="none" stroke-dasharray="2.8 1.2" opacity="0.78"/>
<path d="M732.5 898.1h5M713.8 898.6h4" stroke="#aebab6" stroke-width="1.8" opacity="0.75"/>
<path d="M768.6 857.4L765.3 851.2M771.8 857.4L772.8 846.1M775.0 857.4L780.2 848.9" stroke="#aebab6" stroke-width="1.9" fill="none" stroke-dasharray="2.8 1.2" opacity="0.78"/>
<path d="M777.4 855.9h5M761.5 856.4h4" stroke="#aebab6" stroke-width="1.8" opacity="0.75"/>
<path d="M450.8 843.0L445.6 836.9M454.2 843.0L452.3 830.4M457.7 843.0L462.6 830.9M461.1 843.0L468.8 834.6" stroke="#aebab6" stroke-width="1.9" fill="none" stroke-dasharray="2.8 1.2" opacity="0.78"/>
<path d="M448.9 845.6h14.8" stroke="#aebab6" stroke-width="2.2" opacity="0.8"/>
<path d="M470.0 923.8L463.3 919.6M473.5 923.8L467.1 914.4M477.0 923.8L475.9 912.6M480.5 923.8L482.8 914.8M484.0 923.8L492.7 916.2" stroke="#aebab6" stroke-width="1.9" fill="none" stroke-dasharray="2.8 1.2" opacity="0.78"/>
<path d="M469.8 926.4h15.3" stroke="#aebab6" stroke-width="2.2" opacity="0.8"/>
<path d="M502.8 945.5L499.0 938.5M505.8 945.5L507.9 933.6M508.9 945.5L513.8 937.9" stroke="#aebab6" stroke-width="1.9" fill="none" stroke-dasharray="2.8 1.2" opacity="0.78"/>
<path d="M511.3 944.0h5M495.9 944.5h4" stroke="#aebab6" stroke-width="1.8" opacity="0.75"/>
<path d="M587.3 950.7L582.1 942.1M591.0 950.7L592.9 937.9M594.7 950.7L602.9 941.3" stroke="#aebab6" stroke-width="1.9" fill="none" stroke-dasharray="2.8 1.2" opacity="0.78"/>
<path d="M583.3 953.3h14.5" stroke="#aebab6" stroke-width="2.2" opacity="0.8"/>
<path d="M417.5 885.8L410.5 875.8M421.1 885.8L422.1 876.4M424.7 885.8L431.1 877.2" stroke="#aebab6" stroke-width="1.9" fill="none" stroke-dasharray="2.8 1.2" opacity="0.78"/>
<path d="M427.4 884.3h5M409.4 884.8h4" stroke="#aebab6" stroke-width="1.8" opacity="0.75"/>
<path d="M635.3 857.6L627.4 849.0M638.9 857.6L637.1 846.4M642.5 857.6L643.5 847.7M646.2 857.6L653.9 849.7" stroke="#aebab6" stroke-width="1.9" fill="none" stroke-dasharray="2.8 1.2" opacity="0.78"/>
<path d="M647.1 856.1h5M629.0 856.6h4" stroke="#aebab6" stroke-width="1.8" opacity="0.75"/>
<path d="M517.7 874.7L511.3 868.8M521.5 874.7L518.0 865.1M525.4 874.7L525.7 863.8M529.3 874.7L533.2 865.7M533.1 874.7L539.6 868.5" stroke="#aebab6" stroke-width="1.9" fill="none" stroke-dasharray="2.8 1.2" opacity="0.78"/>
<path d="M517.4 877.3h14.5" stroke="#aebab6" stroke-width="2.2" opacity="0.8"/>
<path d="M441.8 931.2L436.3 924.7M445.0 931.2L442.1 920.2M448.2 931.2L450.0 918.8M451.4 931.2L456.6 920.4M454.6 931.2L462.5 925.6" stroke="#aebab6" stroke-width="1.9" fill="none" stroke-dasharray="2.8 1.2" opacity="0.78"/>
<path d="M453.9 929.7h5M437.9 930.2h4" stroke="#aebab6" stroke-width="1.8" opacity="0.75"/>
<path d="M940.9 582.4L935.1 578.0M944.1 582.4L941.7 574.1M947.3 582.4L947.7 572.6M950.4 582.4L957.1 574.4" stroke="#aebab6" stroke-width="1.9" fill="none" stroke-dasharray="2.8 1.2" opacity="0.78"/>
<path d="M939.1 585.0h14.2" stroke="#aebab6" stroke-width="2.2" opacity="0.8"/>
<path d="M1587.8 726.8L1580.7 721.3M1591.7 726.8L1586.2 717.5M1595.6 726.8L1593.7 716.3M1599.5 726.8L1602.6 714.1M1603.3 726.8L1609.9 719.1" stroke="#aebab6" stroke-width="1.9" fill="none" stroke-dasharray="2.8 1.2" opacity="0.78"/>
<path d="M1602.4 725.3h5M1583.1 725.8h4" stroke="#aebab6" stroke-width="1.8" opacity="0.75"/>
<path d="M1558.8 740.3L1553.2 733.5M1562.2 740.3L1558.5 729.1M1565.6 740.3L1567.8 728.3M1569.1 740.3L1574.6 735.1" stroke="#aebab6" stroke-width="1.9" fill="none" stroke-dasharray="2.8 1.2" opacity="0.78"/>
<path d="M1570.0 738.8h5M1552.8 739.3h4" stroke="#aebab6" stroke-width="1.8" opacity="0.75"/>
<path d="M1082.5 922.4L1075.6 914.1M1086.3 922.4L1083.4 907.6M1090.1 922.4L1094.9 908.8M1093.9 922.4L1101.8 914.3" stroke="#aebab6" stroke-width="1.9" fill="none" stroke-dasharray="2.8 1.2" opacity="0.78"/>
<path d="M1080.4 925.0h12.6" stroke="#aebab6" stroke-width="2.2" opacity="0.8"/>
<path d="M1088.3 908.2L1081.6 902.1M1091.5 908.2L1088.1 896.8M1094.6 908.2L1094.6 899.8M1097.8 908.2L1102.4 900.1" stroke="#aebab6" stroke-width="1.9" fill="none" stroke-dasharray="2.8 1.2" opacity="0.78"/>
<path d="M1086.6 910.8h15.4" stroke="#aebab6" stroke-width="2.2" opacity="0.8"/>
<path d="M1878.2 926.8L1869.4 917.1M1882.2 926.8L1879.3 911.5M1886.2 926.8L1890.5 912.4M1890.1 926.8L1896.2 920.7" stroke="#aebab6" stroke-width="1.9" fill="none" stroke-dasharray="2.8 1.2" opacity="0.78"/>
<path d="M1891.2 925.3h5M1871.3 925.8h4" stroke="#aebab6" stroke-width="1.8" opacity="0.75"/>
<path d="M255.6 1000.2L249.1 992.2M259.3 1000.2L259.4 990.8M263.0 1000.2L267.1 986.9M266.6 1000.2L273.3 995.9" stroke="#aebab6" stroke-width="1.9" fill="none" stroke-dasharray="2.8 1.2" opacity="0.78"/>
<path d="M253.5 1002.8h17.3" stroke="#aebab6" stroke-width="2.2" opacity="0.8"/>
<path d="M205.4 1001.1L197.9 994.0M209.4 1001.1L203.8 987.6M213.5 1001.1L215.6 987.7M217.5 1001.1L224.2 993.3" stroke="#aebab6" stroke-width="1.9" fill="none" stroke-dasharray="2.8 1.2" opacity="0.78"/>
<path d="M218.6 999.6h5M198.3 1000.1h4" stroke="#aebab6" stroke-width="1.8" opacity="0.75"/>
<path d="M295.6 997.3L292.1 990.3M299.0 997.3L302.0 985.2M302.5 997.3L309.7 989.5" stroke="#aebab6" stroke-width="1.9" fill="none" stroke-dasharray="2.8 1.2" opacity="0.78"/>
<path d="M305.1 995.8h5M288.0 996.3h4" stroke="#aebab6" stroke-width="1.8" opacity="0.75"/>
<line x1="691" y1="246.7" x2="314" y2="946" stroke="#b7b4a8" stroke-width="3.1"/>
<text transform="translate(700.5,243.5) rotate(-58)" font-family="Liberation Serif, serif" font-size="22.5" fill="#5a5a5a" letter-spacing="2.6">Carr</text>
<polyline points="339.0,202.7 660.0,241.0 1002.8,280.7 1011.0,277.8 1019.8,264.2 1024.6,255.7 1038.8,263.0 1255.0,294.2 1269.0,296.2 1277.6,256.6 1279.0,248.0 1367.8,257.4 1498.0,270.0 1631.0,303.0 1648.0,310.0 1659.6,323.0 1682.0,351.5 1690.8,371.3 1702.0,408.0 1713.0,425.0 1743.0,461.0 1891.0,483.5" fill="none" stroke="#666" stroke-width="1.7" stroke-dasharray="17 10"/>
<text x="881" y="670.6" font-family="Liberation Serif, serif" font-size="35" font-weight="bold" fill="#7b7d7b" textLength="247" lengthAdjust="spacing">ESCUINTLA</text>
<g filter="url(#halo2)">
<text x="252.5" y="961" font-family="Liberation Serif, serif" font-size="30" fill="#0c0c0c" stroke="#0c0c0c" stroke-width="0.85" textLength="108" lengthAdjust="spacing">Sipacate</text>
<text x="1068" y="1065" font-family="Liberation Serif, serif" font-size="28.5" fill="#0c0c0c" stroke="#0c0c0c" stroke-width="0.85" textLength="145" lengthAdjust="spacing">El Paredon</text>
<text x="1064.5" y="1100.3" font-family="Liberation Serif, serif" font-size="28.5" fill="#0c0c0c" stroke="#0c0c0c" stroke-width="0.85" textLength="153" lengthAdjust="spacing">Buena Vista</text>
</g>
<polygon points="154.6,1030.4 162.0,978.0 194.8,952.9 215.4,949.3 295.1,963.2 343.0,951.6 418.2,978.9 508.1,988.1 542.9,979.3 596.5,993.0 625.4,990.0 647.9,993.0 673.2,976.2 757.7,974.8 786.5,983.2 832.8,974.8 873.1,980.5 903.6,1000.3 919.0,1006.3 1054.8,1032.3 1101.2,988.3 1147.6,977.7 1178.4,945.4 1223.7,933.8 1267.6,912.0 1311.7,914.2 1359.3,876.5 1411.7,884.2 1450.8,844.0 1561.9,824.1 1757.3,859.5 1801.2,890.7 1805.5,975.7 1796.0,975.7 1781.4,1024.7 1761.6,1036.6 1746.0,1039.4 1712.6,1034.3 1666.7,978.5 1624.2,944.5 1518.0,963.8 1503.8,981.4 1476.9,1005.4 1445.7,1013.4 1403.2,1003.2 1381.4,1013.9 1370.0,1037.2 1357.9,1038.0 1331.6,1050.8 1298.4,1050.8 1255.8,1097.0 1224.0,1115.7 1167.7,1129.8 1115.0,1134.5 970.7,1121.3 784.6,1105.4 500.0,1071.7" fill="none" stroke="#4ce10a" stroke-width="5.6" stroke-linejoin="round"/>
<path d="M99.8 396.5h21.4M110.5 385.8v21.4M99.8 599.5h21.4M110.5 588.8v21.4M100.8 802.5h21.4M111.5 791.8v21.4M100.8 1005.5h21.4M111.5 994.8v21.4M101.8 1209.5h21.4M112.5 1198.8v21.4M101.8 1412.5h21.4M112.5 1401.8v21.4M102.8 1615.5h21.4M113.5 1604.8v21.4M307.8 395.5h21.4M318.5 384.8v21.4M307.8 598.5h21.4M318.5 587.8v21.4M308.8 802.5h21.4M319.5 791.8v21.4M308.8 1005.5h21.4M319.5 994.8v21.4M309.8 1208.5h21.4M320.5 1197.8v21.4M309.8 1412.5h21.4M320.5 1401.8v21.4M310.8 1615.5h21.4M321.5 1604.8v21.4M515.8 394.5h21.4M526.5 383.8v21.4M515.8 598.5h21.4M526.5 587.8v21.4M516.8 801.5h21.4M527.5 790.8v21.4M516.8 1004.5h21.4M527.5 993.8v21.4M517.8 1208.5h21.4M528.5 1197.8v21.4M518.8 1411.5h21.4M529.5 1400.8v21.4M518.8 1614.5h21.4M529.5 1603.8v21.4M723.8 394.5h21.4M734.5 383.8v21.4M723.8 597.5h21.4M734.5 586.8v21.4M724.8 801.5h21.4M735.5 790.8v21.4M725.8 1004.5h21.4M736.5 993.8v21.4M725.8 1207.5h21.4M736.5 1196.8v21.4M726.8 1410.5h21.4M737.5 1399.8v21.4M726.8 1614.5h21.4M737.5 1603.8v21.4M931.8 394.5h21.4M942.5 383.8v21.4M932.8 597.5h21.4M943.5 586.8v21.4M932.8 800.5h21.4M943.5 789.8v21.4M933.8 1003.5h21.4M944.5 992.8v21.4M933.8 1207.5h21.4M944.5 1196.8v21.4M934.8 1410.5h21.4M945.5 1399.8v21.4M934.8 1613.5h21.4M945.5 1602.8v21.4M1139.8 393.5h21.4M1150.5 382.8v21.4M1140.8 596.5h21.4M1151.5 585.8v21.4M1140.8 800.5h21.4M1151.5 789.8v21.4M1141.8 1003.5h21.4M1152.5 992.8v21.4M1141.8 1206.5h21.4M1152.5 1195.8v21.4M1142.8 1410.5h21.4M1153.5 1399.8v21.4M1142.8 1613.5h21.4M1153.5 1602.8v21.4M1347.8 392.5h21.4M1358.5 381.8v21.4M1348.8 596.5h21.4M1359.5 585.8v21.4M1348.8 799.5h21.4M1359.5 788.8v21.4M1349.8 1002.5h21.4M1360.5 991.8v21.4M1349.8 1206.5h21.4M1360.5 1195.8v21.4M1350.8 1409.5h21.4M1361.5 1398.8v21.4M1351.8 1612.5h21.4M1362.5 1601.8v21.4M1555.8 392.5h21.4M1566.5 381.8v21.4M1556.8 595.5h21.4M1567.5 584.8v21.4M1556.8 799.5h21.4M1567.5 788.8v21.4M1557.8 1002.5h21.4M1568.5 991.8v21.4M1558.8 1205.5h21.4M1569.5 1194.8v21.4M1558.8 1408.5h21.4M1569.5 1397.8v21.4M1559.8 1612.5h21.4M1570.5 1601.8v21.4M1763.8 392.5h21.4M1774.5 381.8v21.4M1764.8 595.5h21.4M1775.5 584.8v21.4M1765.8 798.5h21.4M1776.5 787.8v21.4M1765.8 1001.5h21.4M1776.5 990.8v21.4M1766.8 1205.5h21.4M1777.5 1194.8v21.4M1766.8 1408.5h21.4M1777.5 1397.8v21.4M1767.8 1611.5h21.4M1778.5 1600.8v21.4" stroke="#3f4a46" stroke-width="1" fill="none" opacity="0.6"/>
<g filter="url(#halo)">
<circle cx="171.25" cy="304.75" r="38.4" fill="#fbfdfc" stroke="none"/>
<polygon points="205.5,270.5 173.9,294.7 171.2,304.8" fill="#3b8d90" stroke="#3b8d90" stroke-width="0.8"/><polygon points="205.5,270.5 181.3,302.1 171.2,304.8" fill="#f3fbfb" stroke="#3b8d90" stroke-width="1.2"/>
<polygon points="205.5,339.0 181.3,307.4 171.2,304.8" fill="#3b8d90" stroke="#3b8d90" stroke-width="0.8"/><polygon points="205.5,339.0 173.9,314.8 171.2,304.8" fill="#f3fbfb" stroke="#3b8d90" stroke-width="1.2"/>
<polygon points="137.0,339.0 168.6,314.8 171.2,304.8" fill="#3b8d90" stroke="#3b8d90" stroke-width="0.8"/><polygon points="137.0,339.0 161.2,307.4 171.2,304.8" fill="#f3fbfb" stroke="#3b8d90" stroke-width="1.2"/>
<polygon points="137.0,270.5 161.2,302.1 171.2,304.8" fill="#3b8d90" stroke="#3b8d90" stroke-width="0.8"/><polygon points="137.0,270.5 168.6,294.7 171.2,304.8" fill="#f3fbfb" stroke="#3b8d90" stroke-width="1.2"/>
<polygon points="171.2,239.4 162.7,295.8 171.2,304.8" fill="#3b8d90" stroke="#3b8d90" stroke-width="0.8"/><polygon points="171.2,239.4 179.8,295.8 171.2,304.8" fill="#f3fbfb" stroke="#3b8d90" stroke-width="1.2"/>
<polygon points="236.6,304.8 180.2,296.1 171.2,304.8" fill="#3b8d90" stroke="#3b8d90" stroke-width="0.8"/><polygon points="236.6,304.8 180.2,313.4 171.2,304.8" fill="#f3fbfb" stroke="#3b8d90" stroke-width="1.2"/>
<polygon points="171.2,370.1 179.8,313.8 171.2,304.8" fill="#3b8d90" stroke="#3b8d90" stroke-width="0.8"/><polygon points="171.2,370.1 162.7,313.8 171.2,304.8" fill="#f3fbfb" stroke="#3b8d90" stroke-width="1.2"/>
<polygon points="106.0,304.8 162.2,313.4 171.2,304.8" fill="#3b8d90" stroke="#3b8d90" stroke-width="0.8"/><polygon points="106.0,304.8 162.2,296.1 171.2,304.8" fill="#f3fbfb" stroke="#3b8d90" stroke-width="1.2"/>
<circle cx="171.25" cy="304.75" r="12.6" fill="#fdfefe" stroke="#3b8d90" stroke-width="1.6"/>
<text x="171.2" y="228.7" font-family="Liberation Sans, sans-serif" font-weight="bold" font-size="23.7" fill="#3b8d90" stroke="#3b8d90" stroke-width="0.9" text-anchor="middle">N</text>
<text x="89.2" y="313.4" font-family="Liberation Sans, sans-serif" font-weight="bold" font-size="23.7" fill="#3b8d90" stroke="#3b8d90" stroke-width="0.9" text-anchor="middle" textLength="19.5" lengthAdjust="spacingAndGlyphs">O</text>
<text x="251.9" y="313.4" font-family="Liberation Sans, sans-serif" font-weight="bold" font-size="23.7" fill="#3b8d90" stroke="#3b8d90" stroke-width="0.9" text-anchor="middle">E</text>
<text x="168" y="398.3" font-family="Liberation Sans, sans-serif" font-weight="bold" font-size="18.3" fill="#3b8d90" stroke="#3b8d90" stroke-width="0.8" text-anchor="middle">S</text>
</g>
<circle cx="171.25" cy="304.75" r="38.4" fill="none" stroke="#3b8d90" stroke-width="0.6" opacity="0.6"/>
<path d="M153.3 1691V1713.3H436.8V1691M188.8 1713.3V1697.2M224.2 1713.3V1697.2M259.6 1713.3V1697.2M295.1 1713.3V1691M330.5 1713.3V1697.2M365.9 1713.3V1697.2M401.3 1713.3V1697.2" fill="none" stroke="#000" stroke-width="2.9" stroke-linecap="butt" stroke-linejoin="miter"/>
<text x="153.3" y="1675.8" font-family="Liberation Sans, sans-serif" font-size="30.7" fill="#111" text-anchor="middle">0</text>
<text x="223.9" y="1675.8" font-family="Liberation Sans, sans-serif" font-size="30.7" fill="#111" text-anchor="middle">0.7</text>
<text x="295" y="1675.8" font-family="Liberation Sans, sans-serif" font-size="30.7" fill="#111" text-anchor="middle">1.4</text>
<text x="414.6" y="1675.8" font-family="Liberation Sans, sans-serif" font-size="30.7" fill="#111" textLength="200" lengthAdjust="spacingAndGlyphs">2.8 Kilómetros</text>
</g>
<rect x="71.6" y="202.6" width="1817.8" height="1553.9" fill="none" stroke="#000" stroke-width="3.3"/>
<line x1="109.6" y1="193.8" x2="109.6" y2="202" stroke="#000" stroke-width="1.25"/>
<text x="109.6" y="193.4" font-family="Liberation Sans, sans-serif" font-size="18.7" fill="#111" text-anchor="middle">428000</text>
<line x1="113.8" y1="1757" x2="113.8" y2="1765.5" stroke="#000" stroke-width="1.25"/>
<text x="113.8" y="1779.2" font-family="Liberation Sans, sans-serif" font-size="18.7" fill="#111" text-anchor="middle">428000</text>
<line x1="317.7" y1="193.8" x2="317.7" y2="202" stroke="#000" stroke-width="1.25"/>
<text x="317.7" y="193.4" font-family="Liberation Sans, sans-serif" font-size="18.7" fill="#111" text-anchor="middle">430000</text>
<line x1="322.0" y1="1757" x2="322.0" y2="1765.5" stroke="#000" stroke-width="1.25"/>
<text x="322.0" y="1779.2" font-family="Liberation Sans, sans-serif" font-size="18.7" fill="#111" text-anchor="middle">430000</text>
<line x1="525.8" y1="193.8" x2="525.8" y2="202" stroke="#000" stroke-width="1.25"/>
<text x="525.8" y="193.4" font-family="Liberation Sans, sans-serif" font-size="18.7" fill="#111" text-anchor="middle">432000</text>
<line x1="530.1" y1="1757" x2="530.1" y2="1765.5" stroke="#000" stroke-width="1.25"/>
<text x="530.1" y="1779.2" font-family="Liberation Sans, sans-serif" font-size="18.7" fill="#111" text-anchor="middle">432000</text>
<line x1="733.9" y1="193.8" x2="733.9" y2="202" stroke="#000" stroke-width="1.25"/>
<text x="733.9" y="193.4" font-family="Liberation Sans, sans-serif" font-size="18.7" fill="#111" text-anchor="middle">434000</text>
<line x1="738.2" y1="1757" x2="738.2" y2="1765.5" stroke="#000" stroke-width="1.25"/>
<text x="738.2" y="1779.2" font-family="Liberation Sans, sans-serif" font-size="18.7" fill="#111" text-anchor="middle">434000</text>
<line x1="942.0" y1="193.8" x2="942.0" y2="202" stroke="#000" stroke-width="1.25"/>
<text x="942.0" y="193.4" font-family="Liberation Sans, sans-serif" font-size="18.7" fill="#111" text-anchor="middle">436000</text>
<line x1="946.3" y1="1757" x2="946.3" y2="1765.5" stroke="#000" stroke-width="1.25"/>
<text x="946.3" y="1779.2" font-family="Liberation Sans, sans-serif" font-size="18.7" fill="#111" text-anchor="middle">436000</text>
<line x1="1150.1" y1="193.8" x2="1150.1" y2="202" stroke="#000" stroke-width="1.25"/>
<text x="1150.1" y="193.4" font-family="Liberation Sans, sans-serif" font-size="18.7" fill="#111" text-anchor="middle">438000</text>
<line x1="1154.4" y1="1757" x2="1154.4" y2="1765.5" stroke="#000" stroke-width="1.25"/>
<text x="1154.4" y="1779.2" font-family="Liberation Sans, sans-serif" font-size="18.7" fill="#111" text-anchor="middle">438000</text>
<line x1="1358.2" y1="193.8" x2="1358.2" y2="202" stroke="#000" stroke-width="1.25"/>
<text x="1358.2" y="193.4" font-family="Liberation Sans, sans-serif" font-size="18.7" fill="#111" text-anchor="middle">440000</text>
<line x1="1362.5" y1="1757" x2="1362.5" y2="1765.5" stroke="#000" stroke-width="1.25"/>
<text x="1362.5" y="1779.2" font-family="Liberation Sans, sans-serif" font-size="18.7" fill="#111" text-anchor="middle">440000</text>
<line x1="1566.3" y1="193.8" x2="1566.3" y2="202" stroke="#000" stroke-width="1.25"/>
<text x="1566.3" y="193.4" font-family="Liberation Sans, sans-serif" font-size="18.7" fill="#111" text-anchor="middle">442000</text>
<line x1="1570.6" y1="1757" x2="1570.6" y2="1765.5" stroke="#000" stroke-width="1.25"/>
<text x="1570.6" y="1779.2" font-family="Liberation Sans, sans-serif" font-size="18.7" fill="#111" text-anchor="middle">442000</text>
<line x1="1774.4" y1="193.8" x2="1774.4" y2="202" stroke="#000" stroke-width="1.25"/>
<text x="1774.4" y="193.4" font-family="Liberation Sans, sans-serif" font-size="18.7" fill="#111" text-anchor="middle">444000</text>
<line x1="1778.7" y1="1757" x2="1778.7" y2="1765.5" stroke="#000" stroke-width="1.25"/>
<text x="1778.7" y="1779.2" font-family="Liberation Sans, sans-serif" font-size="18.7" fill="#111" text-anchor="middle">444000</text>
<line x1="61.5" y1="396.1" x2="71" y2="396.1" stroke="#000" stroke-width="1.25"/>
<text transform="translate(62.2,397.3) rotate(-90)" font-family="Liberation Sans, sans-serif" font-size="18.7" fill="#111" text-anchor="middle">1546000</text>
<line x1="1890" y1="391.7" x2="1899" y2="391.7" stroke="#000" stroke-width="1.25"/>
<text transform="translate(1911.6,392.5) rotate(-90)" font-family="Liberation Sans, sans-serif" font-size="18.7" fill="#111" text-anchor="middle">1546000</text>
<line x1="61.5" y1="599.4" x2="71" y2="599.4" stroke="#000" stroke-width="1.25"/>
<text transform="translate(62.2,600.6) rotate(-90)" font-family="Liberation Sans, sans-serif" font-size="18.7" fill="#111" text-anchor="middle">1544000</text>
<line x1="1890" y1="595.0" x2="1899" y2="595.0" stroke="#000" stroke-width="1.25"/>
<text transform="translate(1911.6,595.8) rotate(-90)" font-family="Liberation Sans, sans-serif" font-size="18.7" fill="#111" text-anchor="middle">1544000</text>
<line x1="61.5" y1="802.7" x2="71" y2="802.7" stroke="#000" stroke-width="1.25"/>
<text transform="translate(62.2,803.9) rotate(-90)" font-family="Liberation Sans, sans-serif" font-size="18.7" fill="#111" text-anchor="middle">1542000</text>
<line x1="1890" y1="798.3" x2="1899" y2="798.3" stroke="#000" stroke-width="1.25"/>
<text transform="translate(1911.6,799.1) rotate(-90)" font-family="Liberation Sans, sans-serif" font-size="18.7" fill="#111" text-anchor="middle">1542000</text>
<line x1="61.5" y1="1006.0" x2="71" y2="1006.0" stroke="#000" stroke-width="1.25"/>
<text transform="translate(62.2,1007.2) rotate(-90)" font-family="Liberation Sans, sans-serif" font-size="18.7" fill="#111" text-anchor="middle">1540000</text>
<line x1="1890" y1="1001.6" x2="1899" y2="1001.6" stroke="#000" stroke-width="1.25"/>
<text transform="translate(1911.6,1002.4) rotate(-90)" font-family="Liberation Sans, sans-serif" font-size="18.7" fill="#111" text-anchor="middle">1540000</text>
<line x1="61.5" y1="1209.3" x2="71" y2="1209.3" stroke="#000" stroke-width="1.25"/>
<text transform="translate(62.2,1210.5) rotate(-90)" font-family="Liberation Sans, sans-serif" font-size="18.7" fill="#111" text-anchor="middle">1538000</text>
<line x1="1890" y1="1204.9" x2="1899" y2="1204.9" stroke="#000" stroke-width="1.25"/>
<text transform="translate(1911.6,1205.7) rotate(-90)" font-family="Liberation Sans, sans-serif" font-size="18.7" fill="#111" text-anchor="middle">1538000</text>
<line x1="61.5" y1="1412.6" x2="71" y2="1412.6" stroke="#000" stroke-width="1.25"/>
<text transform="translate(62.2,1413.8) rotate(-90)" font-family="Liberation Sans, sans-serif" font-size="18.7" fill="#111" text-anchor="middle">1536000</text>
<line x1="1890" y1="1408.2" x2="1899" y2="1408.2" stroke="#000" stroke-width="1.25"/>
<text transform="translate(1911.6,1409.0) rotate(-90)" font-family="Liberation Sans, sans-serif" font-size="18.7" fill="#111" text-anchor="middle">1536000</text>
<line x1="61.5" y1="1615.9" x2="71" y2="1615.9" stroke="#000" stroke-width="1.25"/>
<text transform="translate(62.2,1617.1) rotate(-90)" font-family="Liberation Sans, sans-serif" font-size="18.7" fill="#111" text-anchor="middle">1534000</text>
<line x1="1890" y1="1611.5" x2="1899" y2="1611.5" stroke="#000" stroke-width="1.25"/>
<text transform="translate(1911.6,1612.3) rotate(-90)" font-family="Liberation Sans, sans-serif" font-size="18.7" fill="#111" text-anchor="middle">1534000</text>
<g clip-path="url(#insclip)">
<rect x="1948" y="173" width="599" height="555" fill="#eceee6"/>
<g filter="url(#blur9)" opacity="0.9">
<ellipse cx="2070" cy="330" rx="95" ry="38" fill="#d3dcc8" transform="rotate(25 2070 330)"/>
<ellipse cx="2120" cy="400" rx="80" ry="30" fill="#d3dcc8" transform="rotate(30 2120 400)"/>
<ellipse cx="2015" cy="300" rx="45" ry="25" fill="#d9e1d0" transform="rotate(20 2015 300)"/>
<ellipse cx="2330" cy="215" rx="130" ry="45" fill="#d6dfcc" transform="rotate(0 2330 215)"/>
<ellipse cx="2150" cy="200" rx="70" ry="25" fill="#dfe5d8" transform="rotate(0 2150 200)"/>
<ellipse cx="2480" cy="230" rx="40" ry="50" fill="#dde4d6" transform="rotate(0 2480 230)"/>
<ellipse cx="2025" cy="500" rx="38" ry="60" fill="#d5dec9" transform="rotate(-35 2025 500)"/>
<ellipse cx="2000" cy="440" rx="40" ry="30" fill="#d8e0ce" transform="rotate(-35 2000 440)"/>
<ellipse cx="2400" cy="300" rx="35" ry="90" fill="#d9e1d0" transform="rotate(5 2400 300)"/>
<ellipse cx="2390" cy="400" rx="30" ry="40" fill="#dbe3d3" transform="rotate(0 2390 400)"/>
<ellipse cx="2470" cy="560" rx="70" ry="35" fill="#d8e0ce" transform="rotate(-30 2470 560)"/>
<ellipse cx="2520" cy="500" rx="40" ry="50" fill="#dae2d1" transform="rotate(0 2520 500)"/>
<ellipse cx="2420" cy="620" rx="60" ry="25" fill="#dfe5d7" transform="rotate(-20 2420 620)"/>
<ellipse cx="2470" cy="660" rx="50" ry="20" fill="#dfe5d7" transform="rotate(-10 2470 660)"/>
<ellipse cx="2520" cy="640" rx="30" ry="40" fill="#dde4d5" transform="rotate(0 2520 640)"/>
<ellipse cx="2000" cy="215" rx="50" ry="30" fill="#f1f1ec" transform="rotate(0 2000 215)"/>
<ellipse cx="2040" cy="560" rx="25" ry="30" fill="#f3f3ee" transform="rotate(-40 2040 560)"/>
</g>
<rect x="1948" y="173" width="599" height="555" filter="url(#relief)" opacity="0.55"/>
<polyline points="2018.1,188.7 2017.2,200.1 2013.7,210.6 2010.2,219.4 1997.9,228.2 1990.9,235.2 1981.2,241.4 1966.3,231.7 1959.3,232.6 1951.4,244.0" fill="none" stroke="#c3daf1" stroke-width="2.2" stroke-linejoin="round"/>
<polyline points="2020.7,198.4 2031.3,197.5 2045.3,205.4 2059.4,207.1 2066.4,221.2 2069.9,235.2 2083.9,242.2 2098.0,247.5 2108.5,256.3 2122.6,251.0 2134.8,256.3 2140.1,270.3 2127.8,277.3 2129.6,291.4 2136.6,300.2" fill="none" stroke="#c3daf1" stroke-width="2.4" stroke-linejoin="round"/>
<polyline points="2045.3,177.3 2054.1,194.8 2059.4,207.1" fill="none" stroke="#c3daf1" stroke-width="2.0" stroke-linejoin="round"/>
<polyline points="1951.4,325.6 1964.6,327.4 1975.1,331.8 1980.4,349.3 1992.7,366.9 2003.2,375.6 2006.7,384.4 2001.4,398.5" fill="none" stroke="#c3daf1" stroke-width="2.2" stroke-linejoin="round"/>
<polyline points="2041.8,438.8 2052.3,428.3 2066.4,421.3 2076.9,402.0 2098.0,380.9" fill="none" stroke="#c3daf1" stroke-width="1.6" stroke-linejoin="round"/>
<polyline points="2338.3,590.7 2331.3,603.0 2326.0,618.8 2350.6,618.8" fill="none" stroke="#c3daf1" stroke-width="1.4" stroke-linejoin="round"/>
<polyline points="2412.0,643.4 2408.5,660.9 2394.5,676.7 2389.2,694.3" fill="none" stroke="#c3daf1" stroke-width="1.4" stroke-linejoin="round"/>
<polygon points="1989.1,405.5 2001.4,398.5 2013.7,403.7 2031.3,403.7 2029.5,410.7 2045.3,417.8 2069.9,438.8 2062.9,444.1 2052.3,438.8 2038.3,424.8 2027.8,431.8 2006.7,428.3 2003.2,417.8 1997.9,410.7" fill="#aecdf0"/>
<polygon points="1951.4,466.9 1969.8,480.1 1996.2,506.4 2027.8,539.8 2061.1,574.9 2098.0,604.7 2124.3,620.5 2155.9,631.9 2203.3,631.9 2227.9,637.2 2254.2,648.6 2257.6,648.6 2285.6,669.7 2336.5,674.9 2383.9,697.8 2417.3,705.7 2468.2,704.8 2480.5,694.3 2473.5,682.0 2484.0,676.7 2499.8,678.5 2513.8,690.7 2520.8,708.3 2534.9,718.8 2545.4,725.8 2545.4,743.4 1888.9,743.4 1940.0,760.0" fill="#b3d2f1"/>
<g filter="url(#blur9)">
<polygon points="1940.0,520.0 2020.0,590.0 2100.0,650.0 2200.0,700.0 2300.0,730.0 2300.0,760.0 1940.0,760.0" fill="#8fb3e0" opacity="0.95"/>
<polygon points="1940.0,590.0 2010.0,640.0 2090.0,690.0 2180.0,730.0 2180.0,760.0 1940.0,760.0" fill="#5f86ba" opacity="0.95"/>
<polygon points="1940.0,670.0 2030.0,720.0 2060.0,760.0 1940.0,760.0" fill="#8fb2de" opacity="0.9"/>
<polygon points="2300.0,700.0 2420.0,720.0 2560.0,740.0 2560.0,760.0 2300.0,760.0" fill="#9dbfe8" opacity="0.8"/>
</g>
<g filter="url(#blur5)"><polyline points="1950,612 2030,660 2100,700 2150,730" stroke="#466e9f" stroke-width="9" fill="none" opacity="0.55"/><polyline points="1950,545 2010,590 2060,620" stroke="#7fa6d6" stroke-width="14" fill="none" opacity="0.6"/></g>
<polyline points="1951.4,466.9 1969.8,480.1 1987.4,499.4 1996.2,506.4 2027.8,539.8 2061.1,574.9" fill="none" stroke="#73797f" stroke-width="1.6" stroke-linejoin="round"/>
<polyline points="2257.6,648.6 2275.1,655.6 2285.6,669.7 2336.5,674.9 2383.9,697.8 2417.3,705.7 2468.2,704.8 2480.5,694.3 2473.5,682.0" fill="none" stroke="#73797f" stroke-width="1.6" stroke-linejoin="round"/>
<polygon points="2433.1,172.0 2426.1,184.3 2419.0,194.8 2422.6,201.9 2434.8,194.8 2443.6,196.6 2445.4,217.7 2438.4,238.7 2433.1,263.3 2434.8,277.3 2450.6,280.9 2455.9,256.3 2461.2,235.2 2469.9,210.6 2464.7,191.3 2450.6,182.6 2449.8,172.0" fill="#b3d2f1"/>
<polygon points="2482.2,172.0 2473.5,208.9 2459.4,242.2 2452.4,279.1 2441.9,305.4 2428.7,349.3 2422.6,375.6 2392.7,405.5 2369.9,433.6 2369.6,433.2 2374.4,438.0 2382.4,440.8 2400.0,453.2 2404.0,450.8 2405.7,442.0 2412.1,441.2 2400.0,433.2 2400.8,430.8 2405.7,431.6 2432.1,451.6 2440.1,458.0 2448.1,458.0 2452.1,450.8 2464.1,441.2 2480.0,436.4 2466.9,441.9 2489.1,436.4 2511.3,441.9 2548.2,445.6 2548.2,150.0" fill="#b3d2f1"/>
<g filter="url(#blur9)">
<polygon points="2490.0,165.0 2560.0,165.0 2560.0,470.0 2505.0,440.0 2470.0,420.0 2455.0,380.0 2470.0,330.0 2478.0,280.0 2485.0,220.0" fill="#7fa5da" opacity="0.95"/>
<polygon points="2515.0,165.0 2560.0,165.0 2560.0,300.0 2520.0,330.0 2500.0,300.0 2510.0,230.0" fill="#6a93cf" opacity="0.9"/>
<polygon points="2520.0,320.0 2560.0,300.0 2560.0,400.0 2500.0,420.0 2490.0,380.0" fill="#a9caee" opacity="0.9"/>
</g>
<g filter="url(#blur5)" opacity="0.55"><polyline points="2540,180 2515,260 2490,340 2470,400" stroke="#c4dcf5" stroke-width="7" fill="none"/><polyline points="2560,250 2530,330 2500,400" stroke="#5f88c4" stroke-width="8" fill="none"/></g>
<polygon points="2450.6,172.0 2464.7,191.3 2469.9,210.6 2466.4,222.9 2473.5,208.9 2480.5,182.6 2483.1,172.0" fill="#e6eadf"/>
<polyline points="2433.1,176.4 2426.1,184.3 2419.0,194.8 2422.6,201.9 2434.8,194.8 2443.6,196.6 2445.4,217.7 2438.4,238.7 2433.1,263.3 2434.8,277.3" fill="none" stroke="#7b8087" stroke-width="1.6" stroke-linejoin="round"/>
<polyline points="2448.9,176.4 2450.6,182.6 2464.7,191.3 2469.9,210.6 2461.2,235.2 2455.9,256.3 2450.6,280.9" fill="none" stroke="#7b8087" stroke-width="1.6" stroke-linejoin="round"/>
<polyline points="2428.7,349.3 2422.6,375.6 2415.5,384.4 2392.7,405.5 2369.9,433.6 2369.6,433.2 2370.4,429.2" fill="none" stroke="#7b8087" stroke-width="1.6" stroke-linejoin="round"/>
<polyline points="2440.1,458.0 2448.1,458.0 2452.1,450.8 2464.1,441.2 2480.0,436.4 2466.9,441.9 2489.1,436.4 2511.3,441.9 2548.2,445.6" fill="none" stroke="#7b8087" stroke-width="1.6" stroke-linejoin="round"/>
<circle cx="2453" cy="395" r="1.6" fill="#7b8087"/>
<circle cx="2457" cy="412" r="1.6" fill="#7b8087"/>
<circle cx="2432" cy="377" r="1.6" fill="#7b8087"/>
<circle cx="2440" cy="367" r="1.6" fill="#7b8087"/>
<circle cx="2476" cy="270" r="1.6" fill="#7b8087"/>
<circle cx="2447" cy="268" r="1.6" fill="#7b8087"/>
<polygon points="1940.0,165.0 2017.2,165.0 2015.5,176.4 2010.2,182.6 1996.2,187.8 1975.1,186.9 1951.4,185.7 1940.0,185.7" fill="#aecdf0" stroke="#7b8087" stroke-width="1.6"/>
<polygon points="2089.2,165.0 2148.9,165.0 2147.1,176.4 2138.4,180.8 2126.1,188.7 2115.5,187.8 2096.2,182.6 2091.0,179.0" fill="#aecdf0" stroke="#7b8087" stroke-width="1.6"/>
<polyline points="2348.8,251.0 2348.8,235.2 2359.4,231.7 2373.4,240.5 2378.7,235.2 2385.7,222.9 2394.5,208.9 2401.5,196.6 2406.8,184.3 2415.5,181.7 2426.1,182.6" fill="none" stroke="#cbcbd0" stroke-width="5.0" stroke-linejoin="round" stroke-linecap="round"/>
<polyline points="2348.8,251.0 2348.8,235.2 2359.4,231.7 2373.4,240.5 2378.7,235.2 2385.7,222.9 2394.5,208.9 2401.5,196.6 2406.8,184.3 2415.5,181.7 2426.1,182.6" fill="none" stroke="#767b85" stroke-width="1.4" stroke-dasharray="7 3" stroke-linejoin="round"/>
<polyline points="2331.3,581.9 2347.1,585.4 2357.6,587.2 2362.9,599.5 2373.4,604.7 2383.9,610.0 2392.7,615.3 2396.2,622.3 2415.5,624.0 2434.8,622.3 2454.1,624.0 2468.2,631.1 2485.7,638.1 2485.7,655.6 2480.5,671.4 2489.3,676.7 2475.2,682.0" fill="none" stroke="#cbcbd0" stroke-width="5.0" stroke-linejoin="round" stroke-linecap="round"/>
<polyline points="2331.3,581.9 2347.1,585.4 2357.6,587.2 2362.9,599.5 2373.4,604.7 2383.9,610.0 2392.7,615.3 2396.2,622.3 2415.5,624.0 2434.8,622.3 2454.1,624.0 2468.2,631.1 2485.7,638.1 2485.7,655.6 2480.5,671.4 2489.3,676.7 2475.2,682.0" fill="none" stroke="#767b85" stroke-width="1.4" stroke-dasharray="7 3" stroke-linejoin="round"/>
<polyline points="2473.5,682.0 2485.7,690.7 2492.8,678.5 2499.8,678.5 2513.8,690.7 2520.8,708.3 2534.9,718.8 2545.4,725.8" fill="none" stroke="#7b8087" stroke-width="1.5"/>
<circle cx="2496" cy="683" r="3.0" fill="#8a8d92"/>
<circle cx="2502" cy="690" r="2.2" fill="#8a8d92"/>
<circle cx="2489" cy="697" r="2.0" fill="#8a8d92"/>
<circle cx="2483" cy="690" r="2.5" fill="#8a8d92"/>
<polygon points="2175.2,251.4 2175.2,305.4 2131.3,306.3 2140.0,314.0 2148.9,314.2 2154.0,326.5 2168.0,338.0 2180.5,344.0 2194.5,351.0 2205.0,359.8 2207.7,381.0 2213.8,383.5 2229.6,386.0 2232.3,393.0 2226.0,405.5 2227.0,421.3 2103.2,422.2 2092.7,445.0 2080.4,460.8 2069.9,478.4 2059.4,497.7 2069.9,518.7 2062.9,532.8 2062.9,557.3 2057.6,571.4 2061.0,575.0 2098.0,604.7 2124.3,620.5 2156.0,632.0 2203.3,632.0 2227.9,637.2 2254.2,648.6 2257.6,648.6 2262.8,636.3 2280.4,620.5 2292.7,620.5 2296.2,611.8 2315.5,601.2 2310.2,596.0 2312.0,583.7 2331.3,581.9 2348.8,567.9 2350.6,553.8 2345.3,527.5 2349.6,518.0 2364.0,511.7 2380.0,502.0 2396.0,492.4 2412.0,478.0 2428.0,465.2 2436.0,454.0 2432.0,451.6 2406.0,432.0 2401.0,431.0 2400.0,433.0 2410.0,440.0 2405.7,442.0 2404.0,450.8 2400.0,453.2 2382.4,440.8 2376.0,441.2 2372.0,438.0 2344.0,438.0 2348.0,251.0" fill="#f8c06c"/>
<polyline points="2348.0,251.2 2175.2,251.4 2175.2,305.4 2131.3,306.3" fill="none" stroke="#cbcbd0" stroke-width="5.5" stroke-linejoin="round" stroke-linecap="round"/>
<polyline points="2348.0,251.2 2175.2,251.4 2175.2,305.4 2131.3,306.3" fill="none" stroke="#767b85" stroke-width="1.4" stroke-dasharray="7 3" stroke-linejoin="round"/>
<polyline points="2131.3,306.3 2140.0,314.0 2148.9,314.2 2154.0,326.5 2168.0,338.0 2180.5,344.0 2194.5,351.0 2205.0,359.8 2207.7,381.0 2213.8,383.5 2229.6,386.0 2232.3,393.0 2226.0,405.5 2227.0,421.3 2103.2,422.2 2092.7,445.0 2080.4,460.8 2069.9,478.4 2059.4,497.7 2069.9,518.7 2062.9,532.8 2062.9,557.3 2057.6,571.4 2061.0,575.0" fill="none" stroke="#cbcbd0" stroke-width="5.5" stroke-linejoin="round" stroke-linecap="round"/>
<polyline points="2131.3,306.3 2140.0,314.0 2148.9,314.2 2154.0,326.5 2168.0,338.0 2180.5,344.0 2194.5,351.0 2205.0,359.8 2207.7,381.0 2213.8,383.5 2229.6,386.0 2232.3,393.0 2226.0,405.5 2227.0,421.3 2103.2,422.2 2092.7,445.0 2080.4,460.8 2069.9,478.4 2059.4,497.7 2069.9,518.7 2062.9,532.8 2062.9,557.3 2057.6,571.4 2061.0,575.0" fill="none" stroke="#767b85" stroke-width="1.4" stroke-dasharray="7 3" stroke-linejoin="round"/>
<polyline points="2257.6,648.6 2262.8,636.3 2280.4,620.5 2292.7,620.5 2296.2,611.8 2315.5,601.2 2310.2,596.0 2312.0,583.7 2331.3,581.9 2348.8,567.9 2350.6,553.8 2345.3,527.5 2349.6,518.0 2364.0,511.7 2380.0,502.0 2396.0,492.4 2412.0,478.0 2428.0,465.2 2436.0,454.0" fill="none" stroke="#cbcbd0" stroke-width="5.5" stroke-linejoin="round" stroke-linecap="round"/>
<polyline points="2257.6,648.6 2262.8,636.3 2280.4,620.5 2292.7,620.5 2296.2,611.8 2315.5,601.2 2310.2,596.0 2312.0,583.7 2331.3,581.9 2348.8,567.9 2350.6,553.8 2345.3,527.5 2349.6,518.0 2364.0,511.7 2380.0,502.0 2396.0,492.4 2412.0,478.0 2428.0,465.2 2436.0,454.0" fill="none" stroke="#767b85" stroke-width="1.4" stroke-dasharray="7 3" stroke-linejoin="round"/>
<polyline points="2061.0,575.0 2098.0,604.7 2124.3,620.5 2156.0,632.0 2203.3,632.0 2227.9,637.2 2254.2,648.6 2257.6,648.6" fill="none" stroke="#73797f" stroke-width="1.6" stroke-linejoin="round"/>
<polyline points="2432.0,451.6 2406.0,432.0 2401.0,431.0 2400.0,433.0 2410.0,440.0 2405.7,442.0 2404.0,450.8 2400.0,453.2 2382.4,440.8 2376.0,441.2 2372.0,438.0" fill="none" stroke="#73797f" stroke-width="1.6" stroke-linejoin="round"/>
<polygon points="2324.4,480.4 2336.0,474.0 2349.6,470.0 2364.0,463.6 2366.4,476.4 2356.0,484.4 2348.0,486.8 2339.2,486.0 2335.2,491.6 2332.0,489.2 2331.2,483.6" fill="#aecdf0" stroke="#73797f" stroke-width="1.6" stroke-linejoin="round"/>
<polygon points="2364.0,463.6 2364.8,460.4 2369.6,457.2 2376.8,450.0 2380.0,449.2 2385.6,446.0 2386.4,447.2 2380.0,451.6 2374.4,458.8 2368.0,460.4 2365.6,462.8" fill="#aecdf0" stroke="#73797f" stroke-width="1.4" stroke-linejoin="round"/>
<polyline points="2162.1,425.3 2167.6,441.9 2156.5,456.7 2143.6,471.5 2145.4,493.7 2141.7,510.3" fill="none" stroke="#737578" stroke-width="1.9" stroke-linejoin="round"/>
<polyline points="2200.9,425.3 2195.3,445.6 2193.5,456.7 2208.2,464.1 2211.9,482.6 2193.5,497.4 2191.6,510.3 2204.6,526.9 2210.1,538.0" fill="none" stroke="#737578" stroke-width="1.9" stroke-linejoin="round"/>
<polyline points="2228.6,422.7 2263.7,427.2 2282.2,436.4 2308.0,425.3 2317.3,427.2 2318.4,441.9 2341.3,436.4" fill="none" stroke="#737578" stroke-width="1.9" stroke-linejoin="round"/>
<polyline points="2318.4,441.9 2311.7,475.2 2315.4,490.0 2306.2,510.3 2289.5,512.2" fill="none" stroke="#737578" stroke-width="1.9" stroke-linejoin="round"/>
<polyline points="2210.1,538.0 2252.6,526.9 2274.8,512.2 2306.2,510.3 2330.2,499.2 2346.8,497.4 2348.7,519.5" fill="none" stroke="#737578" stroke-width="1.9" stroke-linejoin="round"/>
<polyline points="2141.7,510.3 2112.2,512.2 2110.3,534.3 2101.1,549.1 2067.8,556.5" fill="none" stroke="#737578" stroke-width="1.9" stroke-linejoin="round"/>
<polyline points="2141.7,510.3 2149.1,530.6 2163.9,543.6 2171.3,534.3 2210.1,538.0" fill="none" stroke="#737578" stroke-width="1.9" stroke-linejoin="round"/>
<polyline points="2121.4,514.0 2123.3,534.3 2138.0,541.7 2126.9,560.2" fill="none" stroke="#737578" stroke-width="1.9" stroke-linejoin="round"/>
<polyline points="2163.9,543.6 2162.1,575.0 2175.0,584.2 2186.1,578.7 2197.2,556.5 2210.1,538.0" fill="none" stroke="#737578" stroke-width="1.9" stroke-linejoin="round"/>
<polyline points="2062.3,569.4 2097.4,571.3 2108.5,556.5 2126.9,560.2 2149.1,571.3 2162.1,575.0" fill="none" stroke="#737578" stroke-width="1.9" stroke-linejoin="round"/>
<polyline points="2119.6,562.0 2115.9,589.8 2101.1,600.8" fill="none" stroke="#737578" stroke-width="1.9" stroke-linejoin="round"/>
<polyline points="2123.3,617.5 2132.5,593.5 2154.7,591.6 2162.1,575.0" fill="none" stroke="#737578" stroke-width="1.9" stroke-linejoin="round"/>
<polyline points="2197.2,556.5 2208.2,560.2 2208.2,580.5 2213.8,599.0 2206.4,626.7" fill="none" stroke="#737578" stroke-width="1.9" stroke-linejoin="round"/>
<polyline points="2213.8,599.0 2226.7,578.7 2245.2,567.6 2245.2,556.5 2228.6,547.3" fill="none" stroke="#737578" stroke-width="1.9" stroke-linejoin="round"/>
<polyline points="2245.2,556.5 2263.7,552.8 2282.2,541.7 2300.6,541.7 2348.7,534.3" fill="none" stroke="#737578" stroke-width="1.9" stroke-linejoin="round"/>
<polyline points="2300.6,541.7 2302.5,571.3 2317.3,580.5" fill="none" stroke="#737578" stroke-width="1.9" stroke-linejoin="round"/>
<polyline points="2245.2,576.8 2274.8,580.5 2302.5,571.3" fill="none" stroke="#737578" stroke-width="1.9" stroke-linejoin="round"/>
<polyline points="2248.9,599.0 2261.8,586.1 2274.8,580.5" fill="none" stroke="#737578" stroke-width="1.9" stroke-linejoin="round"/>
<polyline points="2248.9,599.0 2261.8,611.9 2252.6,626.7 2241.5,628.6 2250.7,645.2" fill="none" stroke="#737578" stroke-width="1.9" stroke-linejoin="round"/>
<polyline points="2282.2,541.7 2289.5,519.5 2280.3,514.0" fill="none" stroke="#737578" stroke-width="1.9" stroke-linejoin="round"/>
<polyline points="2210.1,538.0 2228.6,547.3" fill="none" stroke="#737578" stroke-width="1.9" stroke-linejoin="round"/>
<text x="2067.5" y="507.3" font-family="Liberation Sans, sans-serif" font-weight="bold" font-size="29.5" fill="#8d8f93" stroke="#f3efe9" stroke-width="3.5" stroke-opacity="0.85" stroke-linejoin="round" paint-order="stroke" textLength="222" lengthAdjust="spacing">Guatemala</text>
<text x="2339.5" y="320.7" font-family="Liberation Sans, sans-serif" font-weight="bold" font-size="29.5" fill="#8d8f93" stroke="#f3efe9" stroke-width="3.5" stroke-opacity="0.85" stroke-linejoin="round" paint-order="stroke" letter-spacing="8">Be</text>
<text x="2498.5" y="551.0" font-family="Liberation Sans, sans-serif" font-weight="bold" font-size="27.5" fill="#8d8f93" stroke="#f3efe9" stroke-width="3.5" stroke-opacity="0.85" stroke-linejoin="round" paint-order="stroke" letter-spacing="8">Ho</text>
<text x="2231.5" y="551.0" font-family="Liberation Sans, sans-serif"  font-size="23.2" fill="#6d6f73" stroke="#f3efe9" stroke-width="3.0" stroke-opacity="0.85" stroke-linejoin="round" paint-order="stroke" textLength="119" lengthAdjust="spacingAndGlyphs">Guatemala</text>
<text x="2356.0" y="643.3" font-family="Liberation Sans, sans-serif"  font-size="23.2" fill="#6d6f73" stroke="#f3efe9" stroke-width="3.0" stroke-opacity="0.85" stroke-linejoin="round" paint-order="stroke" textLength="144" lengthAdjust="spacingAndGlyphs">San Salvador</text>
<circle cx="2221.0" cy="561.3" r="6.3" fill="#a9a9ad" stroke="#f6f4f0" stroke-width="1.6"/>
<circle cx="2346.8" cy="653.5" r="6.3" fill="#a9a9ad" stroke="#f6f4f0" stroke-width="1.6"/>
<circle cx="2537.0" cy="611.0" r="6.3" fill="#a9a9ad" stroke="#f6f4f0" stroke-width="1.6"/>
<text x="1953.5" y="620.5" font-family="Liberation Sans, sans-serif" font-style="italic" font-size="19.5" fill="#222" textLength="34" lengthAdjust="spacing">721</text>
<text x="2518.5" y="292" font-family="Liberation Serif, serif" font-weight="bold" font-style="italic" fill="#2f6fb5" font-size="23" letter-spacing="3">Gu</text>
<text x="2533" y="325.5" font-family="Liberation Serif, serif" font-weight="bold" font-style="italic" fill="#2f6fb5" font-size="23" letter-spacing="3">de</text>
<text x="2482" y="360.6" font-family="Liberation Serif, serif" font-weight="bold" font-style="italic" fill="#2f6fb5" font-size="23" letter-spacing="3.5">Hondu</text>
<polyline points="2348,251 2344,438 2372,438" fill="none" stroke="#e8e4e4" stroke-width="4.2" opacity="0.7"/>
<polyline points="2348,251 2344,438 2372,438" fill="none" stroke="#a30000" stroke-width="2.8" stroke-dasharray="11 2.5 2.5 2.5 2.5 2.5"/>
<rect x="2365.5" y="281.2" width="148.3" height="67.8" fill="#fff"/>
<text x="2439.8" y="299.3" font-family="Liberation Sans, sans-serif" font-size="17.6" fill="#111" text-anchor="middle" textLength="93.5" lengthAdjust="spacingAndGlyphs">Diferendo</text>
<text x="2439.8" y="322.0" font-family="Liberation Sans, sans-serif" font-size="17.6" fill="#111" text-anchor="middle" textLength="116.5" lengthAdjust="spacingAndGlyphs">territorial no</text>
<text x="2439.8" y="345.0" font-family="Liberation Sans, sans-serif" font-size="17.6" fill="#111" text-anchor="middle" textLength="76.5" lengthAdjust="spacingAndGlyphs">resuelto</text>
<line x1="1940" y1="698.6" x2="2156" y2="633.5" stroke="#e60000" stroke-width="2.6"/>
<rect x="2157.6" y="624.4" width="16" height="14" rx="1.5" fill="none" stroke="#ee0707" stroke-width="5.2"/>
</g>
<rect x="1949.6" y="174.6" width="595.1" height="551.5" fill="none" stroke="#000" stroke-width="3.2"/>
<line x1="1891" y1="713.2" x2="1948" y2="696.2" stroke="#e60000" stroke-width="2.6"/>
<rect x="1948.3" y="890.4" width="595.3" height="174.8" fill="#e1e1e1" stroke="#000" stroke-width="3"/>
<text x="1974.3" y="933" font-family="Liberation Sans, sans-serif" font-size="33.5" fill="#111" textLength="198" lengthAdjust="spacingAndGlyphs">Simbología</text>
<rect x="1976.5" y="961.2" width="72" height="34.3" fill="#e1e1e1" stroke="#9c9c9c" stroke-width="3" rx="1.5"/>
<text x="2064.8" y="990.4" font-family="Liberation Sans, sans-serif" font-size="33.5" fill="#111" textLength="392" lengthAdjust="spacingAndGlyphs">Límite Departamental</text>
<rect x="1977.6" y="1019.6" width="69.6" height="32.6" fill="#e1e1e1" stroke="#4ce600" stroke-width="5.4" rx="2"/>
<text x="2066.5" y="1048.5" font-family="Liberation Sans, sans-serif" font-size="33.5" fill="#111" textLength="257.5" lengthAdjust="spacingAndGlyphs">Área protegida</text>
<rect x="1970.5" y="1545.2" width="568" height="250.4" fill="#fff" stroke="#000" stroke-width="3"/>
<text x="2292.3" y="1577.0" font-family="Liberation Sans, sans-serif" font-weight="bold" font-style="italic" font-size="20.5" fill="#111" text-anchor="middle" textLength="338.5" lengthAdjust="spacingAndGlyphs">Sistema de coordenadas proyectadas</text>
<text x="2292.3" y="1603.8" font-family="Liberation Sans, sans-serif" font-weight="bold" font-style="italic" font-size="20.5" fill="#111" text-anchor="middle" textLength="145.5" lengthAdjust="spacingAndGlyphs">Proyección GTM</text>
<text x="2292.3" y="1630.9" font-family="Liberation Sans, sans-serif" font-weight="bold" font-style="italic" font-size="20.5" fill="#111" text-anchor="middle" textLength="132.0" lengthAdjust="spacingAndGlyphs">Datum WGS84</text>
<text x="1980.0" y="1652.0" font-family="Liberation Sans, sans-serif" font-weight="bold" font-style="italic" font-size="20.5" fill="#111" text-anchor="start" textLength="68.0" lengthAdjust="spacingAndGlyphs">Fuente:</text>
<text x="1980.0" y="1679.0" font-family="Liberation Sans, sans-serif" font-weight="bold" font-style="italic" font-size="20.5" fill="#111" text-anchor="start" textLength="42.0" lengthAdjust="spacingAndGlyphs">Base</text>
<text x="2036.0" y="1679.0" font-family="Liberation Sans, sans-serif" font-weight="bold" font-style="italic" font-size="20.5" fill="#111" text-anchor="start" textLength="21.0" lengthAdjust="spacingAndGlyphs">de</text>
<text x="2071.0" y="1679.0" font-family="Liberation Sans, sans-serif" font-weight="bold" font-style="italic" font-size="20.5" fill="#111" text-anchor="start" textLength="50.0" lengthAdjust="spacingAndGlyphs">datos</text>
<text x="2135.0" y="1679.0" font-family="Liberation Sans, sans-serif" font-weight="bold" font-style="italic" font-size="20.5" fill="#111" text-anchor="start" textLength="21.0" lengthAdjust="spacingAndGlyphs">de</text>
<text x="2171.0" y="1679.0" font-family="Liberation Sans, sans-serif" font-weight="bold" font-style="italic" font-size="20.5" fill="#111" text-anchor="start" textLength="15.0" lengthAdjust="spacingAndGlyphs">la</text>
<text x="2200.0" y="1679.0" font-family="Liberation Sans, sans-serif" font-weight="bold" font-style="italic" font-size="20.5" fill="#111" text-anchor="start" textLength="84.0" lengthAdjust="spacingAndGlyphs">Dirección</text>
<text x="2297.0" y="1679.0" font-family="Liberation Sans, sans-serif" font-weight="bold" font-style="italic" font-size="20.5" fill="#111" text-anchor="start" textLength="69.0" lengthAdjust="spacingAndGlyphs">Análisis</text>
<text x="2379.0" y="1679.0" font-family="Liberation Sans, sans-serif" font-weight="bold" font-style="italic" font-size="20.5" fill="#111" text-anchor="start" textLength="108.0" lengthAdjust="spacingAndGlyphs">Geoespacial</text>
<text x="1980.0" y="1705.7" font-family="Liberation Sans, sans-serif" font-weight="bold" font-style="italic" font-size="20.5" fill="#111" text-anchor="start" textLength="111.0" lengthAdjust="spacingAndGlyphs">CONAP 2026</text>
<text x="1980.0" y="1732.0" font-family="Liberation Sans, sans-serif" font-weight="bold" font-style="italic" font-size="20.5" fill="#111" text-anchor="start" textLength="378.0" lengthAdjust="spacingAndGlyphs">Base de datos cartografía básica IGN 2010</text>
</svg>
</body></html>
